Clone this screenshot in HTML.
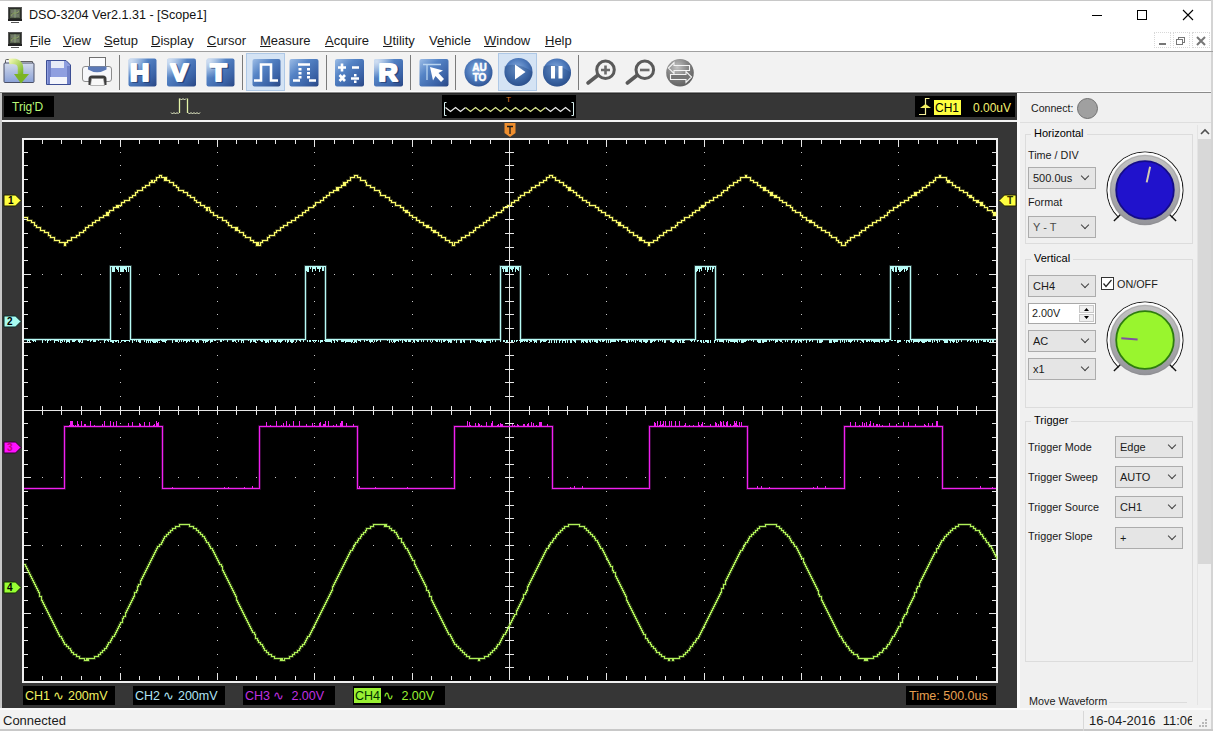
<!DOCTYPE html>
<html><head><meta charset="utf-8">
<style>
*{margin:0;padding:0;box-sizing:border-box}
html,body{width:1213px;height:731px;overflow:hidden;background:#f0f0f0;font-family:"Liberation Sans",sans-serif;color:#1a1a1a}
.a{position:absolute}
.t{position:absolute;white-space:nowrap;line-height:1}
.ul{text-decoration:underline;text-underline-offset:1px;text-decoration-thickness:1px}
.combo{position:absolute;background:#e5e5e5;border:1px solid #acacac;font-size:11px;}
.combo span{position:absolute;left:4px;top:5px;white-space:nowrap;line-height:1}
.combo i{position:absolute;right:7px;top:5px;width:6px;height:6px;border-right:1px solid #404040;border-bottom:1px solid #404040;transform:rotate(45deg);}
.gb{position:absolute;border:1px solid #dcdcdc;}
.gbl{position:absolute;background:#f0f0f0;padding:0 3px;font-size:11px;line-height:1;color:#000}
.lbl{position:absolute;font-size:10.8px;line-height:1;white-space:nowrap}
</style></head>
<body>
<!-- title bar -->
<div class="a" style="left:0;top:0;width:1213px;height:51px;background:#fff"></div>
<div class="a" style="left:0;top:0;width:1213px;height:1px;background:#c8c8c8"></div>
<div class="a" style="left:1211px;top:0;width:2px;height:731px;background:#d4d4d4"></div>
<div class="a" style="left:0;top:51px;width:1213px;height:1px;background:#a0a0a0"></div>
<!-- app icon -->
<svg class="a" style="left:8px;top:7px" width="15" height="17"><rect x="0.5" y="0.5" width="13" height="12" fill="#2a2e28" stroke="#555"/><rect x="2" y="2" width="10" height="9" fill="#5a6450"/><path d="M3 3h3v3h-3zM8 3h3v3h-3zM3 7h3v3h-3zM8 7h3v3h-3z" fill="#707868"/><path d="M7 2.5V10.5" stroke="#a0b890" stroke-width="1"/><path d="M3 9Q5 5 7 6T11 4" stroke="#8aa060" stroke-width="1" fill="none"/><rect x="0" y="12" width="14" height="2" fill="#222"/><rect x="3" y="15" width="8" height="1" fill="#555"/></svg>
<div class="t" style="left:29px;top:9px;font-size:12.6px;color:#111">DSO-3204 Ver2.1.31 - [Scope1]</div>
<div class="a" style="left:1092px;top:15px;width:10px;height:1px;background:#000"></div>
<div class="a" style="left:1137px;top:10px;width:10px;height:10px;border:1px solid #000"></div>
<svg class="a" style="left:1182px;top:9px" width="12" height="12"><path d="M1 1L11 11M11 1L1 11" stroke="#000" stroke-width="1.1"/></svg>
<!-- menu -->
<svg class="a" style="left:8px;top:32px" width="15" height="17"><rect x="0.5" y="0.5" width="13" height="12" fill="#2a2e28" stroke="#555"/><rect x="2" y="2" width="10" height="9" fill="#5a6450"/><path d="M3 3h3v3h-3zM8 3h3v3h-3zM3 7h3v3h-3zM8 7h3v3h-3z" fill="#707868"/><path d="M7 2.5V10.5" stroke="#a0b890" stroke-width="1"/><path d="M3 9Q5 5 7 6T11 4" stroke="#8aa060" stroke-width="1" fill="none"/><rect x="0" y="12" width="14" height="2" fill="#222"/><rect x="3" y="15" width="8" height="1" fill="#555"/></svg>
<div class="t" style="left:30px;top:34px;font-size:13px"><span class="ul">F</span>ile</div>
<div class="t" style="left:63px;top:34px;font-size:13px"><span class="ul">V</span>iew</div>
<div class="t" style="left:104px;top:34px;font-size:13px"><span class="ul">S</span>etup</div>
<div class="t" style="left:151px;top:34px;font-size:13px"><span class="ul">D</span>isplay</div>
<div class="t" style="left:207px;top:34px;font-size:13px"><span class="ul">C</span>ursor</div>
<div class="t" style="left:260px;top:34px;font-size:13px"><span class="ul">M</span>easure</div>
<div class="t" style="left:325px;top:34px;font-size:13px"><span class="ul">A</span>cquire</div>
<div class="t" style="left:383px;top:34px;font-size:13px"><span class="ul">U</span>tility</div>
<div class="t" style="left:429px;top:34px;font-size:13px">V<span class="ul">e</span>hicle</div>
<div class="t" style="left:484px;top:34px;font-size:13px"><span class="ul">W</span>indow</div>
<div class="t" style="left:545px;top:34px;font-size:13px"><span class="ul">H</span>elp</div>
<!-- MDI buttons -->
<div class="a" style="left:1154px;top:32px;width:17px;height:16px;border:1px dotted #d8d8d8"></div>
<div class="a" style="left:1173px;top:32px;width:17px;height:16px;border:1px dotted #d8d8d8"></div>
<div class="a" style="left:1192px;top:32px;width:18px;height:16px;border:1px dotted #d8d8d8"></div>
<div class="a" style="left:1159px;top:43px;width:7px;height:2px;background:#777"></div>
<div class="a" style="left:1178px;top:37px;width:7px;height:6px;border:1px solid #777"></div>
<div class="a" style="left:1176px;top:39px;width:7px;height:6px;border:1px solid #777;background:#fff"></div>
<svg class="a" style="left:1196px;top:36px" width="10" height="10"><path d="M1 1L9 9M9 1L1 9" stroke="#777" stroke-width="2"/></svg>

<!-- toolbar -->
<div class="a" style="left:0;top:52px;width:1211px;height:41px;background:#f2f2f2"></div><div class="a" style="left:0;top:91px;width:1211px;height:1px;background:#fbfbfb"></div><div class="a" style="left:0;top:92px;width:1211px;height:1px;background:#8a8a8a"></div>
<svg class="a" style="left:0;top:52px" width="720" height="41" viewBox="0 52 720 41">
<defs>
 <linearGradient id="bsq" x1="0" y1="0" x2="1" y2="1">
  <stop offset="0" stop-color="#9dbde6"/><stop offset="0.35" stop-color="#5584c6"/><stop offset="0.75" stop-color="#3a62a6"/><stop offset="1" stop-color="#2a4784"/>
 </linearGradient>
 <linearGradient id="bedge" x1="0" y1="0" x2="0" y2="1">
  <stop offset="0" stop-color="#ffffff" stop-opacity="0"/><stop offset="0.8" stop-color="#1a3060" stop-opacity="0"/><stop offset="1" stop-color="#1a3060" stop-opacity="0.5"/>
 </linearGradient>
 <radialGradient id="bci" cx="0.45" cy="0.4" r="0.65">
  <stop offset="0" stop-color="#88aee0"/><stop offset="0.6" stop-color="#4a76b8"/><stop offset="1" stop-color="#2c4f8e"/>
 </radialGradient>
 <radialGradient id="gci" cx="0.4" cy="0.3" r="0.75">
  <stop offset="0" stop-color="#c4c4c4"/><stop offset="0.55" stop-color="#808080"/><stop offset="1" stop-color="#5c5c5c"/>
 </radialGradient>
 <linearGradient id="fold" x1="0" y1="0" x2="0" y2="1">
  <stop offset="0" stop-color="#d4dcec"/><stop offset="0.5" stop-color="#aebde0"/><stop offset="1" stop-color="#8aa2d8"/>
 </linearGradient>
 <linearGradient id="garr" x1="0" y1="0" x2="1" y2="1">
  <stop offset="0" stop-color="#f0f8b0"/><stop offset="1" stop-color="#7ab828"/>
 </linearGradient>
<radialGradient id="hl" cx="0.1" cy="0.1" r="0.6">
  <stop offset="0" stop-color="#ffffff" stop-opacity="0.6"/><stop offset="1" stop-color="#ffffff" stop-opacity="0"/>
 </radialGradient>
</defs>
<!-- separators -->
<path d="M119.5 55V90M242.5 55V90M326.5 55V90M410.5 55V90M455.5 55V90M578.5 55V90" stroke="#7a7a7a" stroke-width="1"/>
<!-- pressed backgrounds -->
<rect x="246.5" y="53.5" width="38" height="37" fill="#d4e3f4" stroke="#aec8e6"/>
<rect x="498.5" y="53.5" width="38" height="37" fill="#d4e3f4" stroke="#aec8e6"/>
<!-- folder -->
<path d="M5.5 63V60.5Q5.5 59.5 6.5 59.5H16L17.5 61.5H32.5V63" fill="#eef0f6" stroke="#606060" stroke-width="1"/>
<rect x="4" y="63" width="30" height="19.5" rx="1" fill="url(#fold)" stroke="#4a5068" stroke-width="1"/>
<path d="M9 61.5Q20.5 60 20.5 68V75" stroke="url(#garr)" stroke-width="5.5" fill="none"/>
<path d="M14 74H29L21 83.5Z" fill="#7cb424"/>
<!-- floppy -->
<path d="M46.5 60.5H66L70.5 65V84.5H46.5Z" fill="#8f9fe0" stroke="#3c4e94" stroke-width="1"/>
<rect x="48" y="61" width="3" height="23" fill="#7282c8"/>
<rect x="67" y="66" width="3" height="18" fill="#7282c8"/>
<rect x="51" y="61" width="13" height="7" fill="#e8ecf8"/>
<rect x="50" y="77" width="17" height="7" fill="#f4f6fc"/>
<!-- printer -->
<rect x="89.5" y="57.5" width="16" height="10" fill="#fafbfd" stroke="#707070" stroke-width="1"/>
<rect x="82.5" y="66.5" width="29" height="15" rx="2.5" fill="#f6f7fa" stroke="#8c8c8c" stroke-width="1"/>
<path d="M88 66.5H106.5V69.5Q97 75 88 69.5Z" fill="#5a78b6"/>
<path d="M88.5 85V79Q88.5 75.5 92 75.5H103Q106.5 75.5 106.5 79V85Z" fill="#3c3c3c"/>
<path d="M90.5 85.5L91.5 78.5H103.5L104.5 85.5Z" fill="#f8f8f8" stroke="#888" stroke-width="0.6"/>
<!-- H V T -->
<rect x="128.5" y="58.5" width="28" height="28" rx="2" fill="url(#bsq)"/><rect x="128.5" y="58.5" width="28" height="28" rx="2" fill="url(#hl)"/>
<rect x="167" y="58.5" width="29" height="28" rx="2" fill="url(#bsq)"/><rect x="167" y="58.5" width="29" height="28" rx="2" fill="url(#hl)"/>
<rect x="206.5" y="58.5" width="28" height="28" rx="2" fill="url(#bsq)"/><rect x="206.5" y="58.5" width="28" height="28" rx="2" fill="url(#hl)"/>
<rect x="374" y="59" width="29" height="27.5" rx="2" fill="url(#bsq)"/><rect x="374" y="59" width="29" height="27.5" rx="2" fill="url(#hl)"/>
<g style="font-family:'Liberation Sans';font-weight:bold" font-size="23" text-anchor="middle" stroke-linejoin="round">
 <g fill="#1a2c58" stroke="#1a2c58" stroke-width="2" opacity="0.55" transform="translate(1.5 1.5)">
  <text transform="translate(139.5 80.5) scale(1.16 1)">H</text>
  <text transform="translate(179.5 80.5) scale(1.16 1)">V</text>
  <text transform="translate(218.5 80.5) scale(1.16 1)">T</text>
  <text transform="translate(388 80.5) scale(1.16 1)">R</text>
 </g>
 <g fill="#fff" stroke="#fff" stroke-width="2">
  <text transform="translate(139.5 80.5) scale(1.16 1)">H</text>
  <text transform="translate(179.5 80.5) scale(1.16 1)">V</text>
  <text transform="translate(218.5 80.5) scale(1.16 1)">T</text>
  <text transform="translate(388 80.5) scale(1.16 1)">R</text>
 </g>
</g>
<g fill="#fff">
 <!-- pulse -->
 <rect x="252.5" y="59" width="28" height="27.5" rx="2" fill="url(#bsq)"/>
 <path d="M254 80.5H261V64.5H271V80.5H278" stroke="#fff" stroke-width="2.6" fill="none"/>
 <!-- dotted pulse -->
 <rect x="289.5" y="59" width="29" height="27.5" rx="2" fill="url(#bsq)"/>
 <path d="M293 80.5H300M309 80.5H316M298 64.5H310" stroke="#fff" stroke-width="2.6" fill="none"/>
 <path d="M298.5 68h3v2.5h-3zM298.5 72h3v2.5h-3zM298.5 76h3v2.5h-3zM307 68h3v2.5h-3zM307 72h3v2.5h-3zM307 76h3v2.5h-3z" fill="#fff"/>
 <!-- math -->
 <rect x="335" y="59" width="29" height="27.5" rx="2" fill="url(#bsq)"/>
 <path d="M338 67.5H346M342 63.5V71.5M352 67.5H359M339.5 75L345 81M345 75L339.5 81M351 78.5H359" stroke="#fff" stroke-width="2.6" fill="none"/>
 <path d="M354 74h2.5v2.5h-2.5zM354 80.5h2.5v2.5h-2.5z" fill="#fff"/>
 <!-- cursor -->
 <rect x="419.5" y="59" width="29" height="27.5" rx="2" fill="url(#bsq)"/>
 <path d="M427 64V80M423 64.5H441" stroke="#b8d4f0" stroke-width="1.3" fill="none"/>
 <path d="M430 67L443 70.5L438.5 73L444 79L441 82L435.5 76L433 80.5Z" fill="#fff"/>
 <!-- AUTO -->
 <circle cx="478.5" cy="72.5" r="14" fill="url(#bci)"/>
 <g style="font-family:'Liberation Sans';font-weight:bold" font-size="10" text-anchor="middle" stroke="#fff" stroke-width="0.5">
 <text x="479.5" y="71">AU</text>
 <text x="479.5" y="80.5">TO</text>
 </g>
 <!-- play -->
 <circle cx="518.5" cy="72" r="14" fill="url(#bci)"/><path d="M504.5 72A14 14 0 0 0 532.5 72Q518 62 504.5 66Z" fill="#23477f" opacity="0.35"/>
 <path d="M515 64.5L525.5 72L515 79.5Z" fill="#fff"/>
 <!-- pause -->
 <circle cx="557" cy="72.5" r="14" fill="url(#bci)"/><path d="M543 72.5A14 14 0 0 0 571 72.5Q556.5 62.5 543 66.5Z" fill="#23477f" opacity="0.35"/>
 <path d="M551 66h4v12.5h-4zM558.5 66h4v12.5h-4z" fill="#fff"/>
</g>
<!-- zoom + -->
<circle cx="605.5" cy="69.8" r="8.8" fill="#f2f2f2" stroke="#5a5a5a" stroke-width="3"/>
<path d="M588 83L597.5 75.5" stroke="#5a5a5a" stroke-width="3.6" stroke-linecap="round"/>
<path d="M601 70H610M605.5 65.5V74.5" stroke="#6a6a6a" stroke-width="2.6"/>
<!-- zoom - -->
<circle cx="644.8" cy="69.8" r="8.8" fill="#f2f2f2" stroke="#5a5a5a" stroke-width="3"/>
<path d="M627.3 83L636.8 75.5" stroke="#5a5a5a" stroke-width="3.6" stroke-linecap="round"/>
<path d="M640 70H649.5" stroke="#6a6a6a" stroke-width="2.6"/>
<!-- gray circle -->
<circle cx="680" cy="72.8" r="13.8" fill="url(#gci)"/>
<path d="M668.5 68L674 62.5V65.5H689.5V70.5H674V73.5Z" fill="none" stroke="#f4f4f4" stroke-width="1.1"/><path d="M691.5 77L686 71.5V74.5H670.5V79.5H686V82.5Z" fill="#767676" stroke="#f4f4f4" stroke-width="1.1"/>
</svg>


<!-- scope area -->
<div class="a" style="left:2px;top:93px;width:1015px;height:615px;background:#363636"></div><div class="a" style="left:2px;top:93px;width:1015px;height:1px;background:#2a2a2a"></div>
<div class="a" style="left:0;top:93px;width:2px;height:616px;background:#c8c8c8"></div>
<div class="a" style="left:2px;top:120px;width:1015px;height:2px;background:#f4f4f4"></div>
<!-- Trig'D -->
<div class="a" style="left:4px;top:96px;width:50px;height:21px;background:#000"></div>
<div class="t" style="left:12px;top:101px;font-size:12px;color:#b8f878">Trig'D</div>
<!-- pulse icon -->
<svg class="a" style="left:0;top:0" width="210" height="125"><path d="M179.5 113V98.5M187.5 98.5V113" stroke="#e4f4a8" stroke-width="1.3" fill="none"/><path d="M171.0 112.5 L172.5 114.0 L174.0 112.5 L175.5 114.0 L177.0 112.5 L178.5 114.0 M180.0 98.5 L181.5 100.0 L183.0 98.5 L184.5 100.0 L186.0 98.5 M188.0 112.5 L189.5 114.0 L191.0 112.5 L192.5 114.0 L194.0 112.5 L195.5 114.0 L197.0 112.5 L198.5 114.0 L200.0 112.5" stroke="#f0f8d0" stroke-width="1" fill="none"/></svg>
<!-- zigzag box -->
<div class="a" style="left:442px;top:95px;width:134px;height:23px;background:#000"></div>
<svg class="a" style="left:0;top:0" width="600" height="125"><path d="M446.5 102.5H444.5V115.5H446.5M571.5 102.5H573.5V115.5H571.5" stroke="#d8f0f0" stroke-width="1" fill="none"/><path d="M445.5 107.5 L450.5 111.5 L455.5 107.5 L460.5 111.5 L465.5 107.5" stroke="#ececec" stroke-width="1.2" fill="none"/><path d="M545.5 107.5 L550.5 111.5 L555.5 107.5 L560.5 111.5 L565.5 107.5 L570.5 111.5" stroke="#ececec" stroke-width="1.2" fill="none"/><path d="M465.5 107.5 L470.5 111.5 L475.5 107.5 L480.5 111.5 L485.5 107.5 L490.5 111.5 L495.5 107.5 L500.5 111.5 L505.5 107.5 L510.5 111.5 L515.5 107.5 L520.5 111.5 L525.5 107.5 L530.5 111.5 L535.5 107.5 L540.5 111.5 L545.5 107.5" stroke="#dce890" stroke-width="1.2" fill="none"/></svg>
<div class="t" style="left:506px;top:96px;font-size:8px;color:#e07a28">T</div>
<!-- trigger info -->
<div class="a" style="left:915px;top:96px;width:100px;height:21px;background:#000"></div>
<svg class="a" style="left:915px;top:96px" width="20" height="21"><path d="M4 18.5H10.5V2.5H14.5" stroke="#f4ef9a" stroke-width="1.2" fill="none"/><path d="M5 12H16L10.5 8Z" fill="#f4ef60"/></svg>
<div class="a" style="left:934px;top:100px;width:27px;height:15px;background:#ffff40"></div>
<div class="t" style="left:935px;top:102px;font-size:12px;color:#000">CH1</div>
<div class="t" style="left:973px;top:102px;font-size:12px;color:#f4f070">0.00uV</div>
<!-- T marker top -->
<svg class="a" style="left:503px;top:122px" width="14" height="16"><path d="M1.5 1H12.5V11L7 15L1.5 11Z" fill="#ee8e2e"/><path d="M4 4.5H10M7 4.5V12" stroke="#1a1a1a" stroke-width="1.3"/></svg>

<svg width="1213" height="731" style="position:absolute;left:0;top:0" shape-rendering="crispEdges"><rect x="23" y="139" width="974" height="543" fill="#000" stroke="#f0f0f0" stroke-width="2"/><path d="M120 152h1v1h-1zM120 165h1v1h-1zM120 179h1v1h-1zM120 192h1v1h-1zM120 206h1v1h-1zM120 219h1v1h-1zM120 233h1v1h-1zM120 247h1v1h-1zM120 260h1v1h-1zM120 274h1v1h-1zM120 287h1v1h-1zM120 301h1v1h-1zM120 314h1v1h-1zM120 328h1v1h-1zM120 342h1v1h-1zM120 355h1v1h-1zM120 369h1v1h-1zM120 382h1v1h-1zM120 396h1v1h-1zM120 410h1v1h-1zM120 423h1v1h-1zM120 437h1v1h-1zM120 450h1v1h-1zM120 464h1v1h-1zM120 477h1v1h-1zM120 491h1v1h-1zM120 505h1v1h-1zM120 518h1v1h-1zM120 532h1v1h-1zM120 545h1v1h-1zM120 559h1v1h-1zM120 572h1v1h-1zM120 586h1v1h-1zM120 600h1v1h-1zM120 613h1v1h-1zM120 627h1v1h-1zM120 640h1v1h-1zM120 654h1v1h-1zM120 667h1v1h-1zM217 152h1v1h-1zM217 165h1v1h-1zM217 179h1v1h-1zM217 192h1v1h-1zM217 206h1v1h-1zM217 219h1v1h-1zM217 233h1v1h-1zM217 247h1v1h-1zM217 260h1v1h-1zM217 274h1v1h-1zM217 287h1v1h-1zM217 301h1v1h-1zM217 314h1v1h-1zM217 328h1v1h-1zM217 342h1v1h-1zM217 355h1v1h-1zM217 369h1v1h-1zM217 382h1v1h-1zM217 396h1v1h-1zM217 410h1v1h-1zM217 423h1v1h-1zM217 437h1v1h-1zM217 450h1v1h-1zM217 464h1v1h-1zM217 477h1v1h-1zM217 491h1v1h-1zM217 505h1v1h-1zM217 518h1v1h-1zM217 532h1v1h-1zM217 545h1v1h-1zM217 559h1v1h-1zM217 572h1v1h-1zM217 586h1v1h-1zM217 600h1v1h-1zM217 613h1v1h-1zM217 627h1v1h-1zM217 640h1v1h-1zM217 654h1v1h-1zM217 667h1v1h-1zM314 152h1v1h-1zM314 165h1v1h-1zM314 179h1v1h-1zM314 192h1v1h-1zM314 206h1v1h-1zM314 219h1v1h-1zM314 233h1v1h-1zM314 247h1v1h-1zM314 260h1v1h-1zM314 274h1v1h-1zM314 287h1v1h-1zM314 301h1v1h-1zM314 314h1v1h-1zM314 328h1v1h-1zM314 342h1v1h-1zM314 355h1v1h-1zM314 369h1v1h-1zM314 382h1v1h-1zM314 396h1v1h-1zM314 410h1v1h-1zM314 423h1v1h-1zM314 437h1v1h-1zM314 450h1v1h-1zM314 464h1v1h-1zM314 477h1v1h-1zM314 491h1v1h-1zM314 505h1v1h-1zM314 518h1v1h-1zM314 532h1v1h-1zM314 545h1v1h-1zM314 559h1v1h-1zM314 572h1v1h-1zM314 586h1v1h-1zM314 600h1v1h-1zM314 613h1v1h-1zM314 627h1v1h-1zM314 640h1v1h-1zM314 654h1v1h-1zM314 667h1v1h-1zM412 152h1v1h-1zM412 165h1v1h-1zM412 179h1v1h-1zM412 192h1v1h-1zM412 206h1v1h-1zM412 219h1v1h-1zM412 233h1v1h-1zM412 247h1v1h-1zM412 260h1v1h-1zM412 274h1v1h-1zM412 287h1v1h-1zM412 301h1v1h-1zM412 314h1v1h-1zM412 328h1v1h-1zM412 342h1v1h-1zM412 355h1v1h-1zM412 369h1v1h-1zM412 382h1v1h-1zM412 396h1v1h-1zM412 410h1v1h-1zM412 423h1v1h-1zM412 437h1v1h-1zM412 450h1v1h-1zM412 464h1v1h-1zM412 477h1v1h-1zM412 491h1v1h-1zM412 505h1v1h-1zM412 518h1v1h-1zM412 532h1v1h-1zM412 545h1v1h-1zM412 559h1v1h-1zM412 572h1v1h-1zM412 586h1v1h-1zM412 600h1v1h-1zM412 613h1v1h-1zM412 627h1v1h-1zM412 640h1v1h-1zM412 654h1v1h-1zM412 667h1v1h-1zM606 152h1v1h-1zM606 165h1v1h-1zM606 179h1v1h-1zM606 192h1v1h-1zM606 206h1v1h-1zM606 219h1v1h-1zM606 233h1v1h-1zM606 247h1v1h-1zM606 260h1v1h-1zM606 274h1v1h-1zM606 287h1v1h-1zM606 301h1v1h-1zM606 314h1v1h-1zM606 328h1v1h-1zM606 342h1v1h-1zM606 355h1v1h-1zM606 369h1v1h-1zM606 382h1v1h-1zM606 396h1v1h-1zM606 410h1v1h-1zM606 423h1v1h-1zM606 437h1v1h-1zM606 450h1v1h-1zM606 464h1v1h-1zM606 477h1v1h-1zM606 491h1v1h-1zM606 505h1v1h-1zM606 518h1v1h-1zM606 532h1v1h-1zM606 545h1v1h-1zM606 559h1v1h-1zM606 572h1v1h-1zM606 586h1v1h-1zM606 600h1v1h-1zM606 613h1v1h-1zM606 627h1v1h-1zM606 640h1v1h-1zM606 654h1v1h-1zM606 667h1v1h-1zM704 152h1v1h-1zM704 165h1v1h-1zM704 179h1v1h-1zM704 192h1v1h-1zM704 206h1v1h-1zM704 219h1v1h-1zM704 233h1v1h-1zM704 247h1v1h-1zM704 260h1v1h-1zM704 274h1v1h-1zM704 287h1v1h-1zM704 301h1v1h-1zM704 314h1v1h-1zM704 328h1v1h-1zM704 342h1v1h-1zM704 355h1v1h-1zM704 369h1v1h-1zM704 382h1v1h-1zM704 396h1v1h-1zM704 410h1v1h-1zM704 423h1v1h-1zM704 437h1v1h-1zM704 450h1v1h-1zM704 464h1v1h-1zM704 477h1v1h-1zM704 491h1v1h-1zM704 505h1v1h-1zM704 518h1v1h-1zM704 532h1v1h-1zM704 545h1v1h-1zM704 559h1v1h-1zM704 572h1v1h-1zM704 586h1v1h-1zM704 600h1v1h-1zM704 613h1v1h-1zM704 627h1v1h-1zM704 640h1v1h-1zM704 654h1v1h-1zM704 667h1v1h-1zM801 152h1v1h-1zM801 165h1v1h-1zM801 179h1v1h-1zM801 192h1v1h-1zM801 206h1v1h-1zM801 219h1v1h-1zM801 233h1v1h-1zM801 247h1v1h-1zM801 260h1v1h-1zM801 274h1v1h-1zM801 287h1v1h-1zM801 301h1v1h-1zM801 314h1v1h-1zM801 328h1v1h-1zM801 342h1v1h-1zM801 355h1v1h-1zM801 369h1v1h-1zM801 382h1v1h-1zM801 396h1v1h-1zM801 410h1v1h-1zM801 423h1v1h-1zM801 437h1v1h-1zM801 450h1v1h-1zM801 464h1v1h-1zM801 477h1v1h-1zM801 491h1v1h-1zM801 505h1v1h-1zM801 518h1v1h-1zM801 532h1v1h-1zM801 545h1v1h-1zM801 559h1v1h-1zM801 572h1v1h-1zM801 586h1v1h-1zM801 600h1v1h-1zM801 613h1v1h-1zM801 627h1v1h-1zM801 640h1v1h-1zM801 654h1v1h-1zM801 667h1v1h-1zM898 152h1v1h-1zM898 165h1v1h-1zM898 179h1v1h-1zM898 192h1v1h-1zM898 206h1v1h-1zM898 219h1v1h-1zM898 233h1v1h-1zM898 247h1v1h-1zM898 260h1v1h-1zM898 274h1v1h-1zM898 287h1v1h-1zM898 301h1v1h-1zM898 314h1v1h-1zM898 328h1v1h-1zM898 342h1v1h-1zM898 355h1v1h-1zM898 369h1v1h-1zM898 382h1v1h-1zM898 396h1v1h-1zM898 410h1v1h-1zM898 423h1v1h-1zM898 437h1v1h-1zM898 450h1v1h-1zM898 464h1v1h-1zM898 477h1v1h-1zM898 491h1v1h-1zM898 505h1v1h-1zM898 518h1v1h-1zM898 532h1v1h-1zM898 545h1v1h-1zM898 559h1v1h-1zM898 572h1v1h-1zM898 586h1v1h-1zM898 600h1v1h-1zM898 613h1v1h-1zM898 627h1v1h-1zM898 640h1v1h-1zM898 654h1v1h-1zM898 667h1v1h-1zM42 206h1v1h-1zM61 206h1v1h-1zM81 206h1v1h-1zM100 206h1v1h-1zM120 206h1v1h-1zM139 206h1v1h-1zM159 206h1v1h-1zM178 206h1v1h-1zM198 206h1v1h-1zM217 206h1v1h-1zM236 206h1v1h-1zM256 206h1v1h-1zM275 206h1v1h-1zM295 206h1v1h-1zM314 206h1v1h-1zM334 206h1v1h-1zM353 206h1v1h-1zM373 206h1v1h-1zM392 206h1v1h-1zM412 206h1v1h-1zM431 206h1v1h-1zM451 206h1v1h-1zM470 206h1v1h-1zM490 206h1v1h-1zM509 206h1v1h-1zM529 206h1v1h-1zM548 206h1v1h-1zM567 206h1v1h-1zM587 206h1v1h-1zM606 206h1v1h-1zM626 206h1v1h-1zM645 206h1v1h-1zM665 206h1v1h-1zM684 206h1v1h-1zM704 206h1v1h-1zM723 206h1v1h-1zM743 206h1v1h-1zM762 206h1v1h-1zM782 206h1v1h-1zM801 206h1v1h-1zM821 206h1v1h-1zM840 206h1v1h-1zM860 206h1v1h-1zM879 206h1v1h-1zM898 206h1v1h-1zM918 206h1v1h-1zM937 206h1v1h-1zM957 206h1v1h-1zM976 206h1v1h-1zM42 274h1v1h-1zM61 274h1v1h-1zM81 274h1v1h-1zM100 274h1v1h-1zM120 274h1v1h-1zM139 274h1v1h-1zM159 274h1v1h-1zM178 274h1v1h-1zM198 274h1v1h-1zM217 274h1v1h-1zM236 274h1v1h-1zM256 274h1v1h-1zM275 274h1v1h-1zM295 274h1v1h-1zM314 274h1v1h-1zM334 274h1v1h-1zM353 274h1v1h-1zM373 274h1v1h-1zM392 274h1v1h-1zM412 274h1v1h-1zM431 274h1v1h-1zM451 274h1v1h-1zM470 274h1v1h-1zM490 274h1v1h-1zM509 274h1v1h-1zM529 274h1v1h-1zM548 274h1v1h-1zM567 274h1v1h-1zM587 274h1v1h-1zM606 274h1v1h-1zM626 274h1v1h-1zM645 274h1v1h-1zM665 274h1v1h-1zM684 274h1v1h-1zM704 274h1v1h-1zM723 274h1v1h-1zM743 274h1v1h-1zM762 274h1v1h-1zM782 274h1v1h-1zM801 274h1v1h-1zM821 274h1v1h-1zM840 274h1v1h-1zM860 274h1v1h-1zM879 274h1v1h-1zM898 274h1v1h-1zM918 274h1v1h-1zM937 274h1v1h-1zM957 274h1v1h-1zM976 274h1v1h-1zM42 342h1v1h-1zM61 342h1v1h-1zM81 342h1v1h-1zM100 342h1v1h-1zM120 342h1v1h-1zM139 342h1v1h-1zM159 342h1v1h-1zM178 342h1v1h-1zM198 342h1v1h-1zM217 342h1v1h-1zM236 342h1v1h-1zM256 342h1v1h-1zM275 342h1v1h-1zM295 342h1v1h-1zM314 342h1v1h-1zM334 342h1v1h-1zM353 342h1v1h-1zM373 342h1v1h-1zM392 342h1v1h-1zM412 342h1v1h-1zM431 342h1v1h-1zM451 342h1v1h-1zM470 342h1v1h-1zM490 342h1v1h-1zM509 342h1v1h-1zM529 342h1v1h-1zM548 342h1v1h-1zM567 342h1v1h-1zM587 342h1v1h-1zM606 342h1v1h-1zM626 342h1v1h-1zM645 342h1v1h-1zM665 342h1v1h-1zM684 342h1v1h-1zM704 342h1v1h-1zM723 342h1v1h-1zM743 342h1v1h-1zM762 342h1v1h-1zM782 342h1v1h-1zM801 342h1v1h-1zM821 342h1v1h-1zM840 342h1v1h-1zM860 342h1v1h-1zM879 342h1v1h-1zM898 342h1v1h-1zM918 342h1v1h-1zM937 342h1v1h-1zM957 342h1v1h-1zM976 342h1v1h-1zM42 477h1v1h-1zM61 477h1v1h-1zM81 477h1v1h-1zM100 477h1v1h-1zM120 477h1v1h-1zM139 477h1v1h-1zM159 477h1v1h-1zM178 477h1v1h-1zM198 477h1v1h-1zM217 477h1v1h-1zM236 477h1v1h-1zM256 477h1v1h-1zM275 477h1v1h-1zM295 477h1v1h-1zM314 477h1v1h-1zM334 477h1v1h-1zM353 477h1v1h-1zM373 477h1v1h-1zM392 477h1v1h-1zM412 477h1v1h-1zM431 477h1v1h-1zM451 477h1v1h-1zM470 477h1v1h-1zM490 477h1v1h-1zM509 477h1v1h-1zM529 477h1v1h-1zM548 477h1v1h-1zM567 477h1v1h-1zM587 477h1v1h-1zM606 477h1v1h-1zM626 477h1v1h-1zM645 477h1v1h-1zM665 477h1v1h-1zM684 477h1v1h-1zM704 477h1v1h-1zM723 477h1v1h-1zM743 477h1v1h-1zM762 477h1v1h-1zM782 477h1v1h-1zM801 477h1v1h-1zM821 477h1v1h-1zM840 477h1v1h-1zM860 477h1v1h-1zM879 477h1v1h-1zM898 477h1v1h-1zM918 477h1v1h-1zM937 477h1v1h-1zM957 477h1v1h-1zM976 477h1v1h-1zM42 545h1v1h-1zM61 545h1v1h-1zM81 545h1v1h-1zM100 545h1v1h-1zM120 545h1v1h-1zM139 545h1v1h-1zM159 545h1v1h-1zM178 545h1v1h-1zM198 545h1v1h-1zM217 545h1v1h-1zM236 545h1v1h-1zM256 545h1v1h-1zM275 545h1v1h-1zM295 545h1v1h-1zM314 545h1v1h-1zM334 545h1v1h-1zM353 545h1v1h-1zM373 545h1v1h-1zM392 545h1v1h-1zM412 545h1v1h-1zM431 545h1v1h-1zM451 545h1v1h-1zM470 545h1v1h-1zM490 545h1v1h-1zM509 545h1v1h-1zM529 545h1v1h-1zM548 545h1v1h-1zM567 545h1v1h-1zM587 545h1v1h-1zM606 545h1v1h-1zM626 545h1v1h-1zM645 545h1v1h-1zM665 545h1v1h-1zM684 545h1v1h-1zM704 545h1v1h-1zM723 545h1v1h-1zM743 545h1v1h-1zM762 545h1v1h-1zM782 545h1v1h-1zM801 545h1v1h-1zM821 545h1v1h-1zM840 545h1v1h-1zM860 545h1v1h-1zM879 545h1v1h-1zM898 545h1v1h-1zM918 545h1v1h-1zM937 545h1v1h-1zM957 545h1v1h-1zM976 545h1v1h-1zM42 613h1v1h-1zM61 613h1v1h-1zM81 613h1v1h-1zM100 613h1v1h-1zM120 613h1v1h-1zM139 613h1v1h-1zM159 613h1v1h-1zM178 613h1v1h-1zM198 613h1v1h-1zM217 613h1v1h-1zM236 613h1v1h-1zM256 613h1v1h-1zM275 613h1v1h-1zM295 613h1v1h-1zM314 613h1v1h-1zM334 613h1v1h-1zM353 613h1v1h-1zM373 613h1v1h-1zM392 613h1v1h-1zM412 613h1v1h-1zM431 613h1v1h-1zM451 613h1v1h-1zM470 613h1v1h-1zM490 613h1v1h-1zM509 613h1v1h-1zM529 613h1v1h-1zM548 613h1v1h-1zM567 613h1v1h-1zM587 613h1v1h-1zM606 613h1v1h-1zM626 613h1v1h-1zM645 613h1v1h-1zM665 613h1v1h-1zM684 613h1v1h-1zM704 613h1v1h-1zM723 613h1v1h-1zM743 613h1v1h-1zM762 613h1v1h-1zM782 613h1v1h-1zM801 613h1v1h-1zM821 613h1v1h-1zM840 613h1v1h-1zM860 613h1v1h-1zM879 613h1v1h-1zM898 613h1v1h-1zM918 613h1v1h-1zM937 613h1v1h-1zM957 613h1v1h-1zM976 613h1v1h-1z" fill="#c8c8c8"/><path d="M42.5 140v4M42.5 680v-4M61.5 140v4M61.5 680v-4M81.5 140v4M81.5 680v-4M100.5 140v4M100.5 680v-4M120.5 140v7M120.5 680v-7M139.5 140v4M139.5 680v-4M159.5 140v4M159.5 680v-4M178.5 140v4M178.5 680v-4M198.5 140v4M198.5 680v-4M217.5 140v7M217.5 680v-7M236.5 140v4M236.5 680v-4M256.5 140v4M256.5 680v-4M275.5 140v4M275.5 680v-4M295.5 140v4M295.5 680v-4M314.5 140v7M314.5 680v-7M334.5 140v4M334.5 680v-4M353.5 140v4M353.5 680v-4M373.5 140v4M373.5 680v-4M392.5 140v4M392.5 680v-4M412.5 140v7M412.5 680v-7M431.5 140v4M431.5 680v-4M451.5 140v4M451.5 680v-4M470.5 140v4M470.5 680v-4M490.5 140v4M490.5 680v-4M509.5 140v7M509.5 680v-7M529.5 140v4M529.5 680v-4M548.5 140v4M548.5 680v-4M567.5 140v4M567.5 680v-4M587.5 140v4M587.5 680v-4M606.5 140v7M606.5 680v-7M626.5 140v4M626.5 680v-4M645.5 140v4M645.5 680v-4M665.5 140v4M665.5 680v-4M684.5 140v4M684.5 680v-4M704.5 140v7M704.5 680v-7M723.5 140v4M723.5 680v-4M743.5 140v4M743.5 680v-4M762.5 140v4M762.5 680v-4M782.5 140v4M782.5 680v-4M801.5 140v7M801.5 680v-7M821.5 140v4M821.5 680v-4M840.5 140v4M840.5 680v-4M860.5 140v4M860.5 680v-4M879.5 140v4M879.5 680v-4M898.5 140v7M898.5 680v-7M918.5 140v4M918.5 680v-4M937.5 140v4M937.5 680v-4M957.5 140v4M957.5 680v-4M976.5 140v4M976.5 680v-4M24 152.5h4M996 152.5h-4M24 165.5h4M996 165.5h-4M24 179.5h4M996 179.5h-4M24 192.5h4M996 192.5h-4M24 206.5h7M996 206.5h-7M24 219.5h4M996 219.5h-4M24 233.5h4M996 233.5h-4M24 247.5h4M996 247.5h-4M24 260.5h4M996 260.5h-4M24 274.5h7M996 274.5h-7M24 287.5h4M996 287.5h-4M24 301.5h4M996 301.5h-4M24 314.5h4M996 314.5h-4M24 328.5h4M996 328.5h-4M24 342.5h7M996 342.5h-7M24 355.5h4M996 355.5h-4M24 369.5h4M996 369.5h-4M24 382.5h4M996 382.5h-4M24 396.5h4M996 396.5h-4M24 410.5h7M996 410.5h-7M24 423.5h4M996 423.5h-4M24 437.5h4M996 437.5h-4M24 450.5h4M996 450.5h-4M24 464.5h4M996 464.5h-4M24 477.5h7M996 477.5h-7M24 491.5h4M996 491.5h-4M24 505.5h4M996 505.5h-4M24 518.5h4M996 518.5h-4M24 532.5h4M996 532.5h-4M24 545.5h7M996 545.5h-7M24 559.5h4M996 559.5h-4M24 572.5h4M996 572.5h-4M24 586.5h4M996 586.5h-4M24 600.5h4M996 600.5h-4M24 613.5h7M996 613.5h-7M24 627.5h4M996 627.5h-4M24 640.5h4M996 640.5h-4M24 654.5h4M996 654.5h-4M24 667.5h4M996 667.5h-4M24 410.5H996M509.5 140V680M42.5 406v9M61.5 406v9M81.5 406v9M100.5 406v9M120.5 406v9M139.5 406v9M159.5 406v9M178.5 406v9M198.5 406v9M217.5 406v9M236.5 406v9M256.5 406v9M275.5 406v9M295.5 406v9M314.5 406v9M334.5 406v9M353.5 406v9M373.5 406v9M392.5 406v9M412.5 406v9M431.5 406v9M451.5 406v9M470.5 406v9M490.5 406v9M509.5 406v9M529.5 406v9M548.5 406v9M567.5 406v9M587.5 406v9M606.5 406v9M626.5 406v9M645.5 406v9M665.5 406v9M684.5 406v9M704.5 406v9M723.5 406v9M743.5 406v9M762.5 406v9M782.5 406v9M801.5 406v9M821.5 406v9M840.5 406v9M860.5 406v9M879.5 406v9M898.5 406v9M918.5 406v9M937.5 406v9M957.5 406v9M976.5 406v9M505 152.5h9M505 165.5h9M505 179.5h9M505 192.5h9M505 206.5h9M505 219.5h9M505 233.5h9M505 247.5h9M505 260.5h9M505 274.5h9M505 287.5h9M505 301.5h9M505 314.5h9M505 328.5h9M505 342.5h9M505 355.5h9M505 369.5h9M505 382.5h9M505 396.5h9M505 410.5h9M505 423.5h9M505 437.5h9M505 450.5h9M505 464.5h9M505 477.5h9M505 491.5h9M505 505.5h9M505 518.5h9M505 532.5h9M505 545.5h9M505 559.5h9M505 572.5h9M505 586.5h9M505 600.5h9M505 613.5h9M505 627.5h9M505 640.5h9M505 654.5h9M505 667.5h9" stroke="#e6e6e6" stroke-width="1" fill="none"/><g shape-rendering="auto" opacity="0.3"><path d="M24 217.5H27.5V220.5H31.5V222.5H34.5V225.5H36.5V227.5H40.5V230.5H44.5V232.5H48.5V235.5H50.5V237.5H54.5V240.5H59.5V242.5H64.5V245.5H65.5V242.5H67.5V240.5H71.5V237.5H76.5V235.5H79.5V232.5H83.5V230.5H85.5V227.5H88.5V225.5H92.5V222.5H95.5V220.5H99.5V217.5H103.5V215.5H106.5V212.5H107.5V215.5H108.5V212.5H109.5V210.5H113.5V207.5H116.5V205.5H117.5V207.5H118.5V205.5H121.5V202.5H124.5V200.5H129.5V197.5H132.5V195.5H135.5V192.5H137.5V190.5H142.5V187.5H145.5V185.5H149.5V182.5H151.5V180.5H152.5V182.5H154.5V180.5H156.5V177.5H159.5V175.5H161.5V177.5H164.5V180.5H165.5V177.5H166.5V180.5H169.5V182.5H173.5V185.5H176.5V187.5H178.5V190.5H183.5V192.5H187.5V195.5H190.5V197.5H194.5V200.5H196.5V202.5H200.5V205.5H204.5V207.5H206.5V210.5H207.5V207.5H209.5V210.5H210.5V212.5H213.5V215.5H217.5V217.5H222.5V220.5H226.5V222.5H228.5V225.5H231.5V227.5H235.5V230.5H236.5V227.5H237.5V230.5H239.5V232.5H243.5V235.5H245.5V237.5H250.5V240.5H253.5V242.5H256.5V245.5H257.5V242.5H258.5V245.5H260.5V242.5H262.5V240.5H267.5V237.5H269.5V235.5H274.5V232.5H276.5V230.5H280.5V227.5H283.5V225.5H287.5V222.5H291.5V220.5H295.5V217.5H298.5V215.5H302.5V212.5H305.5V210.5H308.5V207.5H313.5V205.5H315.5V202.5H320.5V200.5H323.5V197.5H326.5V195.5H329.5V192.5H333.5V190.5H336.5V187.5H337.5V190.5H338.5V187.5H341.5V185.5H343.5V182.5H344.5V185.5H345.5V182.5H347.5V180.5H350.5V177.5H354.5V175.5H357.5V177.5H360.5V180.5H365.5V182.5H366.5V185.5H370.5V187.5H374.5V190.5H379.5V192.5H380.5V195.5H385.5V197.5H389.5V200.5H391.5V202.5H395.5V205.5H400.5V207.5H403.5V210.5H405.5V212.5H406.5V210.5H407.5V212.5H409.5V215.5H412.5V217.5H416.5V220.5H419.5V222.5H423.5V225.5H426.5V227.5H427.5V225.5H428.5V227.5H431.5V230.5H433.5V232.5H434.5V230.5H435.5V232.5H438.5V235.5H441.5V237.5H445.5V240.5H449.5V242.5H452.5V245.5H454.5V242.5H458.5V240.5H461.5V237.5H465.5V235.5H469.5V232.5H473.5V230.5H475.5V227.5H479.5V225.5H483.5V222.5H486.5V220.5H489.5V217.5H493.5V215.5H496.5V212.5H501.5V210.5H503.5V207.5H507.5V205.5H511.5V202.5H514.5V200.5H518.5V197.5H520.5V195.5H524.5V192.5H529.5V190.5H531.5V187.5H535.5V185.5H539.5V182.5H543.5V180.5H546.5V177.5H549.5V175.5H552.5V177.5H555.5V180.5H559.5V182.5H563.5V185.5H566.5V187.5H568.5V190.5H569.5V187.5H570.5V190.5H573.5V192.5H576.5V195.5H579.5V197.5H582.5V200.5H586.5V202.5H589.5V205.5H595.5V207.5H598.5V210.5H601.5V212.5H605.5V215.5H609.5V217.5H612.5V220.5H616.5V222.5H618.5V225.5H619.5V222.5H620.5V225.5H623.5V227.5H627.5V230.5H629.5V232.5H633.5V235.5H637.5V237.5H639.5V240.5H640.5V237.5H641.5V240.5H644.5V242.5H648.5V245.5H649.5V242.5H653.5V240.5H657.5V237.5H659.5V235.5H663.5V232.5H666.5V230.5H671.5V227.5H675.5V225.5H677.5V222.5H681.5V220.5H684.5V217.5H689.5V215.5H692.5V212.5H695.5V210.5H699.5V207.5H701.5V205.5H702.5V207.5H703.5V205.5H705.5V202.5H709.5V200.5H713.5V197.5H717.5V195.5H721.5V192.5H723.5V190.5H727.5V187.5H729.5V185.5H733.5V182.5H737.5V180.5H740.5V177.5H745.5V175.5H746.5V177.5H750.5V180.5H753.5V182.5H757.5V185.5H760.5V187.5H763.5V190.5H764.5V187.5H765.5V190.5H768.5V192.5H770.5V195.5H771.5V192.5H772.5V195.5H774.5V197.5H775.5V195.5H776.5V197.5H779.5V200.5H782.5V202.5H786.5V205.5H790.5V207.5H792.5V210.5H795.5V212.5H800.5V215.5H802.5V217.5H806.5V220.5H809.5V222.5H810.5V220.5H811.5V222.5H814.5V225.5H817.5V227.5H821.5V230.5H825.5V232.5H829.5V235.5H831.5V237.5H836.5V240.5H838.5V242.5H841.5V245.5H845.5V242.5H847.5V240.5H850.5V237.5H854.5V235.5H859.5V232.5H861.5V230.5H865.5V227.5H868.5V225.5H872.5V222.5H876.5V220.5H880.5V217.5H884.5V215.5H887.5V212.5H889.5V210.5H893.5V207.5H897.5V205.5H900.5V202.5H904.5V200.5H908.5V197.5H911.5V195.5H914.5V192.5H915.5V195.5H916.5V192.5H919.5V190.5H922.5V187.5H926.5V185.5H929.5V182.5H933.5V180.5H935.5V177.5H939.5V175.5H940.5V177.5H946.5V180.5H947.5V182.5H948.5V180.5H949.5V182.5H952.5V185.5H955.5V187.5H959.5V190.5H963.5V192.5H967.5V195.5H969.5V197.5H970.5V195.5H971.5V197.5H973.5V200.5H976.5V202.5H977.5V200.5H978.5V202.5H980.5V205.5H981.5V202.5H982.5V205.5H984.5V207.5H987.5V210.5H992.5V212.5H993.5V215.5H994.5V212.5H995.5V215.5H996" stroke="#fafa6a" stroke-width="2.6" fill="none"/><path d="M24 339.5H110.5V266.5H130.5V339.5H305.5V266.5H325.5V339.5H500.5V266.5H520.5V339.5H695.5V266.5H715.5V339.5H890.5V266.5H910.5V339.5H996" stroke="#b8fbf6" stroke-width="2.6" fill="none"/><path d="M112.5 267v5M113.5 267v5M114.5 267v5M116.5 267v2M117.5 267v3M118.5 267v5M120.5 267v5M121.5 267v5M122.5 267v5M123.5 267v5M124.5 267v2M125.5 267v3M126.5 267v5M128.5 267v5M306.5 267v4M307.5 267v5M308.5 267v5M310.5 267v2M312.5 267v5M313.5 267v2M314.5 267v2M315.5 267v4M317.5 267v2M318.5 267v2M319.5 267v5M320.5 267v2M322.5 267v4M323.5 267v4M502.5 267v2M503.5 267v5M504.5 267v2M505.5 267v5M506.5 267v5M507.5 267v5M509.5 267v5M510.5 267v2M511.5 267v3M512.5 267v5M513.5 267v2M515.5 267v5M516.5 267v2M517.5 267v3M518.5 267v4M696.5 267v5M697.5 267v4M698.5 267v2M699.5 267v5M700.5 267v2M701.5 267v4M705.5 267v3M707.5 267v5M708.5 267v3M710.5 267v3M712.5 267v5M713.5 267v2M891.5 267v2M892.5 267v4M893.5 267v5M895.5 267v5M896.5 267v5M898.5 267v3M899.5 267v5M900.5 267v5M901.5 267v4M902.5 267v3M903.5 267v2M904.5 267v5M905.5 267v2M906.5 267v4M907.5 267v3M27.5 340v2M28.5 340v1M29.5 340v2M32.5 340v1M33.5 340v2M34.5 340v1M35.5 340v2M42.5 340v3M45.5 340v1M47.5 340v3M48.5 340v1M50.5 340v1M54.5 340v3M55.5 340v1M56.5 340v1M57.5 340v1M58.5 340v2M60.5 340v3M61.5 340v1M62.5 340v2M64.5 340v2M66.5 340v3M67.5 340v2M68.5 340v2M69.5 340v3M72.5 340v2M73.5 340v2M74.5 340v2M75.5 340v1M78.5 340v2M79.5 340v3M80.5 340v2M82.5 340v3M87.5 340v1M88.5 340v1M90.5 340v2M91.5 340v1M93.5 340v2M94.5 340v2M95.5 340v2M98.5 340v1M104.5 340v3M105.5 340v1M107.5 340v1M108.5 340v2M110.5 340v2M111.5 340v2M112.5 340v3M113.5 340v3M114.5 340v1M115.5 340v2M116.5 340v2M117.5 340v1M118.5 340v3M121.5 340v2M122.5 340v1M123.5 340v1M124.5 340v2M125.5 340v2M126.5 340v1M127.5 340v1M128.5 340v1M129.5 340v2M132.5 340v3M134.5 340v1M136.5 340v2M138.5 340v2M139.5 340v2M140.5 340v3M144.5 340v2M146.5 340v3M147.5 340v1M148.5 340v3M149.5 340v1M150.5 340v3M151.5 340v1M152.5 340v2M153.5 340v3M154.5 340v3M155.5 340v3M156.5 340v2M157.5 340v3M158.5 340v1M159.5 340v1M161.5 340v1M162.5 340v2M163.5 340v2M164.5 340v2M165.5 340v3M166.5 340v1M172.5 340v3M175.5 340v2M176.5 340v2M177.5 340v2M179.5 340v2M181.5 340v2M183.5 340v2M184.5 340v1M185.5 340v1M186.5 340v3M187.5 340v2M188.5 340v1M189.5 340v2M192.5 340v2M193.5 340v2M195.5 340v1M196.5 340v3M197.5 340v2M198.5 340v2M202.5 340v1M203.5 340v3M204.5 340v1M205.5 340v3M206.5 340v2M207.5 340v2M208.5 340v1M210.5 340v3M211.5 340v2M212.5 340v2M214.5 340v1M215.5 340v1M220.5 340v2M221.5 340v2M223.5 340v1M227.5 340v2M232.5 340v2M233.5 340v2M234.5 340v1M235.5 340v2M238.5 340v2M241.5 340v3M242.5 340v1M243.5 340v3M248.5 340v1M250.5 340v3M251.5 340v2M253.5 340v2M254.5 340v2M255.5 340v3M257.5 340v1M260.5 340v1M261.5 340v2M262.5 340v2M264.5 340v1M265.5 340v3M266.5 340v3M267.5 340v2M268.5 340v3M270.5 340v2M273.5 340v2M274.5 340v2M275.5 340v3M276.5 340v2M278.5 340v2M279.5 340v2M280.5 340v3M281.5 340v2M282.5 340v1M285.5 340v2M287.5 340v3M288.5 340v2M290.5 340v2M291.5 340v3M292.5 340v3M293.5 340v2M296.5 340v2M299.5 340v1M300.5 340v2M303.5 340v2M307.5 340v2M309.5 340v2M310.5 340v2M312.5 340v1M313.5 340v2M314.5 340v1M315.5 340v2M316.5 340v1M318.5 340v2M320.5 340v3M321.5 340v2M322.5 340v2M324.5 340v1M325.5 340v2M326.5 340v2M327.5 340v2M328.5 340v2M329.5 340v2M330.5 340v2M331.5 340v3M333.5 340v1M334.5 340v3M336.5 340v1M337.5 340v2M341.5 340v2M342.5 340v2M343.5 340v2M344.5 340v1M345.5 340v3M346.5 340v2M347.5 340v2M348.5 340v2M349.5 340v2M350.5 340v2M351.5 340v3M352.5 340v2M354.5 340v3M355.5 340v2M356.5 340v3M358.5 340v1M359.5 340v1M360.5 340v2M364.5 340v2M366.5 340v1M367.5 340v1M369.5 340v2M370.5 340v3M371.5 340v2M372.5 340v2M374.5 340v2M376.5 340v2M377.5 340v1M380.5 340v2M387.5 340v1M389.5 340v3M391.5 340v2M393.5 340v2M394.5 340v3M395.5 340v2M396.5 340v1M397.5 340v1M398.5 340v2M400.5 340v1M402.5 340v3M404.5 340v1M405.5 340v2M406.5 340v2M408.5 340v2M409.5 340v2M410.5 340v2M413.5 340v2M414.5 340v3M416.5 340v1M417.5 340v2M418.5 340v2M421.5 340v2M423.5 340v2M427.5 340v2M430.5 340v2M432.5 340v2M435.5 340v1M436.5 340v2M437.5 340v2M439.5 340v2M441.5 340v3M443.5 340v2M444.5 340v2M445.5 340v1M447.5 340v1M448.5 340v3M449.5 340v2M450.5 340v3M451.5 340v2M454.5 340v1M456.5 340v3M460.5 340v3M461.5 340v3M463.5 340v2M464.5 340v3M470.5 340v3M475.5 340v1M476.5 340v2M477.5 340v1M478.5 340v2M479.5 340v2M480.5 340v3M481.5 340v2M483.5 340v2M484.5 340v3M485.5 340v3M486.5 340v1M487.5 340v1M488.5 340v1M489.5 340v1M490.5 340v3M492.5 340v2M495.5 340v2M500.5 340v2M503.5 340v2M504.5 340v2M506.5 340v3M507.5 340v2M511.5 340v2M512.5 340v2M514.5 340v2M516.5 340v2M517.5 340v1M519.5 340v1M520.5 340v3M521.5 340v2M522.5 340v2M523.5 340v1M524.5 340v2M525.5 340v1M526.5 340v2M527.5 340v2M529.5 340v1M530.5 340v2M531.5 340v2M533.5 340v1M534.5 340v3M535.5 340v2M536.5 340v3M540.5 340v3M541.5 340v2M542.5 340v1M543.5 340v2M544.5 340v2M545.5 340v2M546.5 340v1M549.5 340v3M551.5 340v3M554.5 340v3M556.5 340v3M559.5 340v3M560.5 340v1M562.5 340v3M563.5 340v1M564.5 340v1M565.5 340v3M567.5 340v2M570.5 340v3M571.5 340v3M573.5 340v1M574.5 340v2M575.5 340v3M581.5 340v3M582.5 340v2M583.5 340v3M584.5 340v1M585.5 340v2M586.5 340v3M587.5 340v2M589.5 340v2M590.5 340v3M592.5 340v2M594.5 340v2M595.5 340v2M596.5 340v3M597.5 340v3M599.5 340v1M600.5 340v2M602.5 340v2M603.5 340v2M604.5 340v1M606.5 340v2M608.5 340v3M610.5 340v3M611.5 340v2M612.5 340v2M613.5 340v2M614.5 340v2M615.5 340v2M617.5 340v1M618.5 340v2M621.5 340v2M622.5 340v1M623.5 340v1M624.5 340v1M625.5 340v1M626.5 340v2M627.5 340v3M629.5 340v2M631.5 340v2M632.5 340v1M633.5 340v2M635.5 340v3M637.5 340v1M639.5 340v2M640.5 340v2M641.5 340v3M643.5 340v2M644.5 340v2M645.5 340v3M646.5 340v3M647.5 340v2M650.5 340v3M651.5 340v3M652.5 340v2M653.5 340v1M654.5 340v2M655.5 340v1M658.5 340v2M660.5 340v1M662.5 340v2M664.5 340v3M665.5 340v2M670.5 340v2M671.5 340v2M672.5 340v3M673.5 340v3M674.5 340v2M677.5 340v2M678.5 340v3M679.5 340v1M680.5 340v3M682.5 340v3M683.5 340v3M684.5 340v1M690.5 340v1M691.5 340v2M692.5 340v1M694.5 340v2M697.5 340v2M698.5 340v1M700.5 340v2M701.5 340v3M703.5 340v3M705.5 340v2M706.5 340v2M707.5 340v3M708.5 340v3M710.5 340v3M714.5 340v3M715.5 340v1M717.5 340v2M719.5 340v2M720.5 340v2M721.5 340v2M722.5 340v2M723.5 340v2M726.5 340v2M728.5 340v3M729.5 340v1M730.5 340v2M731.5 340v2M732.5 340v2M733.5 340v2M734.5 340v3M735.5 340v2M736.5 340v2M737.5 340v3M739.5 340v2M741.5 340v3M742.5 340v3M743.5 340v2M744.5 340v2M745.5 340v2M746.5 340v1M748.5 340v1M751.5 340v1M753.5 340v2M757.5 340v2M758.5 340v3M759.5 340v3M760.5 340v3M762.5 340v2M763.5 340v3M764.5 340v2M765.5 340v2M766.5 340v2M769.5 340v2M771.5 340v1M773.5 340v1M775.5 340v3M776.5 340v2M777.5 340v2M779.5 340v1M780.5 340v2M781.5 340v2M785.5 340v2M787.5 340v2M791.5 340v3M792.5 340v1M795.5 340v3M796.5 340v2M798.5 340v3M799.5 340v1M800.5 340v2M801.5 340v2M803.5 340v1M806.5 340v3M809.5 340v2M810.5 340v1M812.5 340v2M817.5 340v3M819.5 340v3M820.5 340v3M821.5 340v2M822.5 340v2M829.5 340v3M830.5 340v3M831.5 340v3M833.5 340v2M834.5 340v3M835.5 340v2M836.5 340v2M837.5 340v2M840.5 340v3M842.5 340v2M844.5 340v3M846.5 340v2M848.5 340v2M849.5 340v2M850.5 340v3M851.5 340v2M852.5 340v1M854.5 340v2M857.5 340v2M861.5 340v1M862.5 340v2M863.5 340v3M866.5 340v2M867.5 340v2M868.5 340v1M869.5 340v2M871.5 340v2M872.5 340v1M873.5 340v2M874.5 340v3M875.5 340v2M876.5 340v2M877.5 340v2M878.5 340v2M879.5 340v2M881.5 340v2M882.5 340v2M884.5 340v1M885.5 340v3M886.5 340v2M887.5 340v2M888.5 340v2M891.5 340v1M892.5 340v1M894.5 340v1M895.5 340v1M897.5 340v3M898.5 340v2M899.5 340v2M900.5 340v2M904.5 340v1M906.5 340v3M907.5 340v1M908.5 340v2M909.5 340v3M911.5 340v2M913.5 340v3M914.5 340v2M915.5 340v2M916.5 340v2M917.5 340v2M918.5 340v2M919.5 340v2M920.5 340v1M921.5 340v2M922.5 340v3M923.5 340v3M924.5 340v3M925.5 340v2M926.5 340v2M927.5 340v1M928.5 340v2M929.5 340v2M930.5 340v2M932.5 340v3M934.5 340v2M936.5 340v1M937.5 340v3M939.5 340v2M943.5 340v1M944.5 340v3M945.5 340v3M946.5 340v3M947.5 340v3M949.5 340v1M950.5 340v3M951.5 340v1M952.5 340v2M953.5 340v3M954.5 340v2M956.5 340v3M958.5 340v2M961.5 340v2M967.5 340v2M968.5 340v1M970.5 340v2M971.5 340v1M973.5 340v2M975.5 340v1M976.5 340v3M978.5 340v3M981.5 340v1M983.5 340v2M984.5 340v2M985.5 340v2M987.5 340v2M988.5 340v2M990.5 340v3M992.5 340v2M993.5 340v2" stroke="#b8fbf6" stroke-width="1" fill="none"/><path d="M24 488.5H64.5V426.5H162.5V488.5H259.5V426.5H357.5V488.5H454.5V426.5H552.5V488.5H649.5V426.5H747.5V488.5H844.5V426.5H942.5V488.5H996" stroke="#f020f0" stroke-width="2.6" fill="none"/><path d="M69.5 426v-1M70.5 426v-5M71.5 426v-5M72.5 426v-5M73.5 426v-1M75.5 426v-1M77.5 426v-5M78.5 426v-2M81.5 426v-5M84.5 426v-2M85.5 426v-2M90.5 426v-5M94.5 426v-1M102.5 426v-2M104.5 426v-5M110.5 426v-5M113.5 426v-4M116.5 426v-5M128.5 426v-3M132.5 426v-4M139.5 426v-3M140.5 426v-2M144.5 426v-4M149.5 426v-4M153.5 426v-1M154.5 426v-2M156.5 426v-5M157.5 426v-3M158.5 426v-4M172.5 488v-1M224.5 488v-1M228.5 488v-1M244.5 488v-1M252.5 488v-2M266.5 426v-4M270.5 426v-1M276.5 426v-5M281.5 426v-1M283.5 426v-3M286.5 426v-5M289.5 426v-2M293.5 426v-5M299.5 426v-5M306.5 426v-2M312.5 426v-3M314.5 426v-1M319.5 426v-3M320.5 426v-4M323.5 426v-2M324.5 426v-2M325.5 426v-5M328.5 426v-5M333.5 426v-1M336.5 426v-2M340.5 426v-3M341.5 426v-5M342.5 426v-5M346.5 426v-3M353.5 426v-2M359.5 488v-2M375.5 488v-1M407.5 488v-1M467.5 426v-5M469.5 426v-4M470.5 426v-1M475.5 426v-3M478.5 426v-3M479.5 426v-2M481.5 426v-1M486.5 426v-4M491.5 426v-3M492.5 426v-5M497.5 426v-1M498.5 426v-2M500.5 426v-3M501.5 426v-2M502.5 426v-2M512.5 426v-2M514.5 426v-1M517.5 426v-2M518.5 426v-1M523.5 426v-2M524.5 426v-2M527.5 426v-2M528.5 426v-3M531.5 426v-4M533.5 426v-3M536.5 426v-1M539.5 426v-4M540.5 426v-4M541.5 426v-4M547.5 426v-2M570.5 488v-1M574.5 488v-2M582.5 488v-2M654.5 426v-4M655.5 426v-3M657.5 426v-5M659.5 426v-1M660.5 426v-5M661.5 426v-1M662.5 426v-2M663.5 426v-5M665.5 426v-5M669.5 426v-5M671.5 426v-5M675.5 426v-5M679.5 426v-5M684.5 426v-1M685.5 426v-3M689.5 426v-1M693.5 426v-1M698.5 426v-4M699.5 426v-1M701.5 426v-2M702.5 426v-4M710.5 426v-2M715.5 426v-4M716.5 426v-3M718.5 426v-2M720.5 426v-5M721.5 426v-4M723.5 426v-5M724.5 426v-1M726.5 426v-4M727.5 426v-5M730.5 426v-2M733.5 426v-1M734.5 426v-5M735.5 426v-3M736.5 426v-5M737.5 426v-1M739.5 426v-4M741.5 426v-4M757.5 488v-2M761.5 488v-2M769.5 488v-1M813.5 488v-1M817.5 488v-2M825.5 488v-2M850.5 426v-4M855.5 426v-4M859.5 426v-1M862.5 426v-4M864.5 426v-3M866.5 426v-4M869.5 426v-2M870.5 426v-5M873.5 426v-3M876.5 426v-2M877.5 426v-2M879.5 426v-2M882.5 426v-1M889.5 426v-3M896.5 426v-2M903.5 426v-4M908.5 426v-4M915.5 426v-2M924.5 426v-2M925.5 426v-1M928.5 426v-3M932.5 426v-3M936.5 426v-5M937.5 426v-5M980.5 488v-2M992.5 488v-1" stroke="#f020f0" stroke-width="1" fill="none"/><path d="M24 564.5H25.5V566.5H26.5V568.5H27.5V570.5H28.5V572.5H29.5V574.5H30.5V576.5H31.5V578.5H32.5V580.5H33.5V582.5H34.5V584.5H35.5V586.5H36.5V588.5H37.5V590.5H38.5V592.5H39.5V596.5H41.5V600.5H42.5V602.5H43.5V604.5H44.5V606.5H45.5V608.5H46.5V610.5H47.5V612.5H48.5V614.5H49.5V616.5H50.5V618.5H51.5V620.5H52.5V622.5H53.5V624.5H54.5V626.5H55.5V628.5H56.5V630.5H57.5V632.5H58.5V634.5H59.5V636.5H61.5V638.5H62.5V640.5H63.5V642.5H64.5V644.5H66.5V646.5H68.5V648.5H70.5V650.5H71.5V652.5H73.5V654.5H76.5V656.5H79.5V658.5H84.5V660.5H86.5V658.5H87.5V660.5H88.5V658.5H94.5V656.5H98.5V654.5H100.5V652.5H102.5V650.5H104.5V648.5H106.5V646.5H107.5V644.5H108.5V642.5H110.5V640.5H111.5V638.5H112.5V636.5H114.5V634.5H115.5V632.5H116.5V630.5H117.5V628.5H118.5V626.5H119.5V624.5H120.5V622.5H122.5V618.5H123.5V616.5H125.5V612.5H126.5V610.5H127.5V608.5H128.5V606.5H129.5V604.5H130.5V602.5H131.5V600.5H132.5V598.5H133.5V596.5H134.5V592.5H136.5V590.5H137.5V586.5H138.5V584.5H140.5V580.5H141.5V578.5H142.5V576.5H143.5V574.5H144.5V572.5H145.5V570.5H146.5V568.5H147.5V566.5H148.5V564.5H149.5V562.5H150.5V560.5H151.5V558.5H152.5V556.5H153.5V554.5H154.5V552.5H155.5V550.5H156.5V548.5H157.5V546.5H159.5V544.5H161.5V542.5H162.5V540.5H163.5V538.5H164.5V536.5H166.5V534.5H168.5V532.5H170.5V530.5H172.5V528.5H175.5V526.5H179.5V524.5H189.5V526.5H193.5V528.5H196.5V530.5H198.5V532.5H200.5V534.5H202.5V536.5H204.5V538.5H205.5V540.5H206.5V542.5H208.5V544.5H209.5V546.5H210.5V548.5H212.5V550.5H213.5V552.5H214.5V554.5H215.5V556.5H216.5V558.5H217.5V560.5H218.5V562.5H219.5V564.5H221.5V566.5H222.5V570.5H223.5V572.5H224.5V574.5H225.5V576.5H226.5V578.5H227.5V580.5H228.5V582.5H229.5V584.5H230.5V586.5H231.5V588.5H232.5V590.5H233.5V592.5H234.5V594.5H235.5V596.5H236.5V600.5H237.5V602.5H238.5V604.5H239.5V606.5H240.5V608.5H241.5V610.5H242.5V612.5H243.5V614.5H244.5V616.5H245.5V618.5H246.5V620.5H247.5V622.5H248.5V624.5H249.5V626.5H250.5V628.5H251.5V630.5H252.5V632.5H254.5V634.5H255.5V638.5H257.5V640.5H258.5V642.5H260.5V644.5H262.5V646.5H263.5V648.5H264.5V650.5H266.5V652.5H268.5V654.5H271.5V656.5H274.5V658.5H280.5V660.5H281.5V658.5H282.5V660.5H284.5V658.5H289.5V656.5H292.5V654.5H294.5V652.5H297.5V650.5H299.5V648.5H300.5V646.5H302.5V644.5H304.5V642.5H305.5V640.5H306.5V638.5H307.5V636.5H309.5V634.5H310.5V632.5H311.5V630.5H312.5V628.5H313.5V626.5H314.5V624.5H315.5V622.5H316.5V620.5H317.5V618.5H318.5V616.5H319.5V614.5H320.5V612.5H321.5V610.5H322.5V608.5H323.5V606.5H324.5V604.5H325.5V602.5H326.5V600.5H327.5V598.5H328.5V596.5H329.5V594.5H330.5V592.5H331.5V590.5H332.5V586.5H333.5V584.5H334.5V582.5H335.5V580.5H336.5V578.5H337.5V576.5H338.5V574.5H339.5V572.5H340.5V570.5H341.5V568.5H342.5V566.5H343.5V564.5H344.5V562.5H345.5V560.5H346.5V558.5H347.5V556.5H348.5V554.5H349.5V552.5H350.5V550.5H352.5V548.5H353.5V546.5H354.5V544.5H355.5V542.5H357.5V540.5H358.5V538.5H360.5V536.5H361.5V534.5H363.5V532.5H365.5V530.5H366.5V528.5H370.5V526.5H373.5V524.5H384.5V526.5H385.5V524.5H386.5V526.5H389.5V528.5H391.5V530.5H394.5V532.5H396.5V534.5H397.5V536.5H398.5V538.5H401.5V542.5H403.5V544.5H404.5V546.5H405.5V548.5H407.5V550.5H408.5V552.5H409.5V554.5H410.5V556.5H411.5V558.5H412.5V560.5H414.5V564.5H415.5V566.5H416.5V568.5H417.5V570.5H418.5V572.5H419.5V574.5H420.5V576.5H421.5V578.5H422.5V580.5H423.5V582.5H424.5V584.5H425.5V586.5H426.5V590.5H428.5V592.5H429.5V596.5H431.5V600.5H432.5V602.5H433.5V604.5H434.5V606.5H435.5V608.5H436.5V610.5H437.5V612.5H438.5V614.5H439.5V616.5H440.5V618.5H441.5V620.5H442.5V622.5H443.5V624.5H444.5V626.5H445.5V628.5H446.5V630.5H447.5V632.5H448.5V634.5H450.5V636.5H451.5V638.5H452.5V640.5H453.5V642.5H454.5V644.5H456.5V646.5H458.5V648.5H460.5V650.5H462.5V652.5H464.5V654.5H466.5V656.5H469.5V658.5H478.5V660.5H479.5V658.5H484.5V656.5H488.5V654.5H490.5V652.5H492.5V650.5H494.5V648.5H496.5V646.5H497.5V644.5H499.5V642.5H500.5V640.5H501.5V638.5H502.5V636.5H503.5V634.5H505.5V632.5H506.5V630.5H507.5V628.5H508.5V626.5H509.5V624.5H510.5V622.5H511.5V620.5H512.5V618.5H513.5V616.5H514.5V614.5H516.5V610.5H517.5V608.5H518.5V606.5H519.5V604.5H520.5V602.5H521.5V600.5H522.5V598.5H523.5V594.5H525.5V592.5H526.5V590.5H527.5V586.5H528.5V584.5H529.5V582.5H530.5V580.5H531.5V578.5H532.5V576.5H533.5V574.5H534.5V572.5H535.5V570.5H536.5V568.5H537.5V566.5H538.5V564.5H539.5V562.5H540.5V560.5H541.5V558.5H542.5V556.5H543.5V554.5H544.5V552.5H545.5V550.5H546.5V548.5H548.5V546.5H549.5V544.5H550.5V542.5H552.5V540.5H553.5V538.5H555.5V536.5H556.5V534.5H558.5V532.5H560.5V530.5H562.5V528.5H564.5V526.5H568.5V524.5H579.5V526.5H584.5V528.5H586.5V530.5H588.5V532.5H590.5V534.5H592.5V536.5H594.5V538.5H595.5V540.5H597.5V542.5H598.5V544.5H599.5V546.5H600.5V548.5H602.5V550.5H603.5V552.5H604.5V554.5H605.5V556.5H606.5V558.5H607.5V560.5H608.5V562.5H609.5V564.5H610.5V566.5H612.5V570.5H613.5V572.5H615.5V576.5H616.5V578.5H617.5V580.5H618.5V582.5H619.5V584.5H620.5V586.5H621.5V588.5H622.5V590.5H623.5V592.5H624.5V594.5H625.5V596.5H626.5V600.5H627.5V602.5H628.5V604.5H629.5V606.5H630.5V608.5H631.5V610.5H632.5V612.5H633.5V614.5H634.5V616.5H635.5V618.5H636.5V620.5H637.5V622.5H638.5V624.5H639.5V626.5H640.5V628.5H641.5V630.5H642.5V632.5H643.5V634.5H645.5V638.5H647.5V640.5H648.5V642.5H650.5V644.5H651.5V646.5H653.5V648.5H655.5V650.5H656.5V652.5H659.5V654.5H661.5V656.5H664.5V658.5H668.5V660.5H669.5V658.5H672.5V660.5H673.5V658.5H679.5V656.5H683.5V654.5H685.5V652.5H687.5V650.5H689.5V648.5H690.5V646.5H692.5V644.5H693.5V642.5H695.5V640.5H696.5V638.5H698.5V636.5H699.5V634.5H700.5V632.5H701.5V630.5H702.5V628.5H703.5V626.5H704.5V624.5H705.5V622.5H706.5V620.5H707.5V618.5H708.5V616.5H709.5V614.5H710.5V612.5H711.5V610.5H712.5V608.5H713.5V606.5H714.5V604.5H715.5V602.5H716.5V600.5H717.5V598.5H718.5V596.5H719.5V594.5H720.5V592.5H721.5V588.5H723.5V584.5H725.5V580.5H726.5V578.5H727.5V576.5H728.5V574.5H729.5V572.5H730.5V570.5H731.5V568.5H732.5V566.5H733.5V564.5H734.5V562.5H735.5V560.5H736.5V558.5H737.5V556.5H738.5V554.5H739.5V552.5H740.5V550.5H742.5V548.5H743.5V546.5H744.5V544.5H745.5V542.5H747.5V540.5H748.5V538.5H749.5V536.5H751.5V534.5H753.5V532.5H755.5V530.5H757.5V528.5H759.5V526.5H765.5V524.5H776.5V526.5H779.5V528.5H781.5V530.5H783.5V532.5H785.5V534.5H787.5V536.5H789.5V538.5H790.5V540.5H791.5V542.5H793.5V544.5H794.5V546.5H796.5V548.5H797.5V550.5H798.5V552.5H799.5V554.5H800.5V556.5H801.5V558.5H803.5V562.5H804.5V564.5H805.5V566.5H806.5V568.5H807.5V570.5H808.5V572.5H809.5V574.5H810.5V576.5H811.5V578.5H812.5V580.5H813.5V582.5H814.5V584.5H815.5V586.5H816.5V588.5H817.5V590.5H818.5V594.5H819.5V596.5H821.5V600.5H822.5V602.5H823.5V604.5H824.5V606.5H825.5V608.5H826.5V610.5H827.5V612.5H828.5V614.5H829.5V616.5H830.5V618.5H831.5V620.5H832.5V622.5H833.5V624.5H834.5V626.5H835.5V628.5H836.5V630.5H837.5V632.5H838.5V634.5H839.5V636.5H841.5V638.5H842.5V640.5H843.5V642.5H845.5V644.5H846.5V646.5H848.5V648.5H849.5V650.5H851.5V652.5H853.5V654.5H857.5V656.5H858.5V658.5H864.5V660.5H865.5V658.5H866.5V660.5H867.5V658.5H873.5V656.5H877.5V654.5H879.5V652.5H882.5V650.5H883.5V648.5H886.5V646.5H887.5V644.5H889.5V642.5H890.5V640.5H891.5V638.5H892.5V636.5H894.5V634.5H895.5V632.5H896.5V630.5H897.5V628.5H898.5V626.5H900.5V622.5H902.5V618.5H903.5V616.5H904.5V614.5H906.5V612.5H907.5V608.5H908.5V606.5H909.5V604.5H910.5V602.5H911.5V600.5H912.5V598.5H913.5V596.5H914.5V592.5H916.5V588.5H917.5V586.5H919.5V582.5H920.5V580.5H921.5V578.5H922.5V576.5H923.5V574.5H924.5V572.5H925.5V570.5H926.5V568.5H927.5V566.5H928.5V564.5H929.5V562.5H930.5V560.5H931.5V558.5H932.5V556.5H933.5V554.5H934.5V552.5H936.5V548.5H938.5V546.5H939.5V544.5H940.5V542.5H941.5V540.5H943.5V538.5H944.5V536.5H946.5V534.5H948.5V532.5H950.5V530.5H952.5V528.5H955.5V526.5H958.5V524.5H970.5V526.5H973.5V528.5H975.5V530.5H979.5V532.5H980.5V534.5H982.5V536.5H983.5V538.5H985.5V540.5H986.5V542.5H988.5V544.5H989.5V546.5H991.5V548.5H992.5V550.5H993.5V552.5H994.5V554.5H995.5V556.5H996.5V558.5H996" stroke="#b0f058" stroke-width="2.6" fill="none"/></g><path d="M24 217.5H27.5V220.5H31.5V222.5H34.5V225.5H36.5V227.5H40.5V230.5H44.5V232.5H48.5V235.5H50.5V237.5H54.5V240.5H59.5V242.5H64.5V245.5H65.5V242.5H67.5V240.5H71.5V237.5H76.5V235.5H79.5V232.5H83.5V230.5H85.5V227.5H88.5V225.5H92.5V222.5H95.5V220.5H99.5V217.5H103.5V215.5H106.5V212.5H107.5V215.5H108.5V212.5H109.5V210.5H113.5V207.5H116.5V205.5H117.5V207.5H118.5V205.5H121.5V202.5H124.5V200.5H129.5V197.5H132.5V195.5H135.5V192.5H137.5V190.5H142.5V187.5H145.5V185.5H149.5V182.5H151.5V180.5H152.5V182.5H154.5V180.5H156.5V177.5H159.5V175.5H161.5V177.5H164.5V180.5H165.5V177.5H166.5V180.5H169.5V182.5H173.5V185.5H176.5V187.5H178.5V190.5H183.5V192.5H187.5V195.5H190.5V197.5H194.5V200.5H196.5V202.5H200.5V205.5H204.5V207.5H206.5V210.5H207.5V207.5H209.5V210.5H210.5V212.5H213.5V215.5H217.5V217.5H222.5V220.5H226.5V222.5H228.5V225.5H231.5V227.5H235.5V230.5H236.5V227.5H237.5V230.5H239.5V232.5H243.5V235.5H245.5V237.5H250.5V240.5H253.5V242.5H256.5V245.5H257.5V242.5H258.5V245.5H260.5V242.5H262.5V240.5H267.5V237.5H269.5V235.5H274.5V232.5H276.5V230.5H280.5V227.5H283.5V225.5H287.5V222.5H291.5V220.5H295.5V217.5H298.5V215.5H302.5V212.5H305.5V210.5H308.5V207.5H313.5V205.5H315.5V202.5H320.5V200.5H323.5V197.5H326.5V195.5H329.5V192.5H333.5V190.5H336.5V187.5H337.5V190.5H338.5V187.5H341.5V185.5H343.5V182.5H344.5V185.5H345.5V182.5H347.5V180.5H350.5V177.5H354.5V175.5H357.5V177.5H360.5V180.5H365.5V182.5H366.5V185.5H370.5V187.5H374.5V190.5H379.5V192.5H380.5V195.5H385.5V197.5H389.5V200.5H391.5V202.5H395.5V205.5H400.5V207.5H403.5V210.5H405.5V212.5H406.5V210.5H407.5V212.5H409.5V215.5H412.5V217.5H416.5V220.5H419.5V222.5H423.5V225.5H426.5V227.5H427.5V225.5H428.5V227.5H431.5V230.5H433.5V232.5H434.5V230.5H435.5V232.5H438.5V235.5H441.5V237.5H445.5V240.5H449.5V242.5H452.5V245.5H454.5V242.5H458.5V240.5H461.5V237.5H465.5V235.5H469.5V232.5H473.5V230.5H475.5V227.5H479.5V225.5H483.5V222.5H486.5V220.5H489.5V217.5H493.5V215.5H496.5V212.5H501.5V210.5H503.5V207.5H507.5V205.5H511.5V202.5H514.5V200.5H518.5V197.5H520.5V195.5H524.5V192.5H529.5V190.5H531.5V187.5H535.5V185.5H539.5V182.5H543.5V180.5H546.5V177.5H549.5V175.5H552.5V177.5H555.5V180.5H559.5V182.5H563.5V185.5H566.5V187.5H568.5V190.5H569.5V187.5H570.5V190.5H573.5V192.5H576.5V195.5H579.5V197.5H582.5V200.5H586.5V202.5H589.5V205.5H595.5V207.5H598.5V210.5H601.5V212.5H605.5V215.5H609.5V217.5H612.5V220.5H616.5V222.5H618.5V225.5H619.5V222.5H620.5V225.5H623.5V227.5H627.5V230.5H629.5V232.5H633.5V235.5H637.5V237.5H639.5V240.5H640.5V237.5H641.5V240.5H644.5V242.5H648.5V245.5H649.5V242.5H653.5V240.5H657.5V237.5H659.5V235.5H663.5V232.5H666.5V230.5H671.5V227.5H675.5V225.5H677.5V222.5H681.5V220.5H684.5V217.5H689.5V215.5H692.5V212.5H695.5V210.5H699.5V207.5H701.5V205.5H702.5V207.5H703.5V205.5H705.5V202.5H709.5V200.5H713.5V197.5H717.5V195.5H721.5V192.5H723.5V190.5H727.5V187.5H729.5V185.5H733.5V182.5H737.5V180.5H740.5V177.5H745.5V175.5H746.5V177.5H750.5V180.5H753.5V182.5H757.5V185.5H760.5V187.5H763.5V190.5H764.5V187.5H765.5V190.5H768.5V192.5H770.5V195.5H771.5V192.5H772.5V195.5H774.5V197.5H775.5V195.5H776.5V197.5H779.5V200.5H782.5V202.5H786.5V205.5H790.5V207.5H792.5V210.5H795.5V212.5H800.5V215.5H802.5V217.5H806.5V220.5H809.5V222.5H810.5V220.5H811.5V222.5H814.5V225.5H817.5V227.5H821.5V230.5H825.5V232.5H829.5V235.5H831.5V237.5H836.5V240.5H838.5V242.5H841.5V245.5H845.5V242.5H847.5V240.5H850.5V237.5H854.5V235.5H859.5V232.5H861.5V230.5H865.5V227.5H868.5V225.5H872.5V222.5H876.5V220.5H880.5V217.5H884.5V215.5H887.5V212.5H889.5V210.5H893.5V207.5H897.5V205.5H900.5V202.5H904.5V200.5H908.5V197.5H911.5V195.5H914.5V192.5H915.5V195.5H916.5V192.5H919.5V190.5H922.5V187.5H926.5V185.5H929.5V182.5H933.5V180.5H935.5V177.5H939.5V175.5H940.5V177.5H946.5V180.5H947.5V182.5H948.5V180.5H949.5V182.5H952.5V185.5H955.5V187.5H959.5V190.5H963.5V192.5H967.5V195.5H969.5V197.5H970.5V195.5H971.5V197.5H973.5V200.5H976.5V202.5H977.5V200.5H978.5V202.5H980.5V205.5H981.5V202.5H982.5V205.5H984.5V207.5H987.5V210.5H992.5V212.5H993.5V215.5H994.5V212.5H995.5V215.5H996" stroke="#fafa6a" stroke-width="1.2" fill="none"/><path d="M24 339.5H110.5V266.5H130.5V339.5H305.5V266.5H325.5V339.5H500.5V266.5H520.5V339.5H695.5V266.5H715.5V339.5H890.5V266.5H910.5V339.5H996" stroke="#b8fbf6" stroke-width="1.2" fill="none"/><path d="M112.5 267v5M113.5 267v5M114.5 267v5M116.5 267v2M117.5 267v3M118.5 267v5M120.5 267v5M121.5 267v5M122.5 267v5M123.5 267v5M124.5 267v2M125.5 267v3M126.5 267v5M128.5 267v5M306.5 267v4M307.5 267v5M308.5 267v5M310.5 267v2M312.5 267v5M313.5 267v2M314.5 267v2M315.5 267v4M317.5 267v2M318.5 267v2M319.5 267v5M320.5 267v2M322.5 267v4M323.5 267v4M502.5 267v2M503.5 267v5M504.5 267v2M505.5 267v5M506.5 267v5M507.5 267v5M509.5 267v5M510.5 267v2M511.5 267v3M512.5 267v5M513.5 267v2M515.5 267v5M516.5 267v2M517.5 267v3M518.5 267v4M696.5 267v5M697.5 267v4M698.5 267v2M699.5 267v5M700.5 267v2M701.5 267v4M705.5 267v3M707.5 267v5M708.5 267v3M710.5 267v3M712.5 267v5M713.5 267v2M891.5 267v2M892.5 267v4M893.5 267v5M895.5 267v5M896.5 267v5M898.5 267v3M899.5 267v5M900.5 267v5M901.5 267v4M902.5 267v3M903.5 267v2M904.5 267v5M905.5 267v2M906.5 267v4M907.5 267v3M27.5 340v2M28.5 340v1M29.5 340v2M32.5 340v1M33.5 340v2M34.5 340v1M35.5 340v2M42.5 340v3M45.5 340v1M47.5 340v3M48.5 340v1M50.5 340v1M54.5 340v3M55.5 340v1M56.5 340v1M57.5 340v1M58.5 340v2M60.5 340v3M61.5 340v1M62.5 340v2M64.5 340v2M66.5 340v3M67.5 340v2M68.5 340v2M69.5 340v3M72.5 340v2M73.5 340v2M74.5 340v2M75.5 340v1M78.5 340v2M79.5 340v3M80.5 340v2M82.5 340v3M87.5 340v1M88.5 340v1M90.5 340v2M91.5 340v1M93.5 340v2M94.5 340v2M95.5 340v2M98.5 340v1M104.5 340v3M105.5 340v1M107.5 340v1M108.5 340v2M110.5 340v2M111.5 340v2M112.5 340v3M113.5 340v3M114.5 340v1M115.5 340v2M116.5 340v2M117.5 340v1M118.5 340v3M121.5 340v2M122.5 340v1M123.5 340v1M124.5 340v2M125.5 340v2M126.5 340v1M127.5 340v1M128.5 340v1M129.5 340v2M132.5 340v3M134.5 340v1M136.5 340v2M138.5 340v2M139.5 340v2M140.5 340v3M144.5 340v2M146.5 340v3M147.5 340v1M148.5 340v3M149.5 340v1M150.5 340v3M151.5 340v1M152.5 340v2M153.5 340v3M154.5 340v3M155.5 340v3M156.5 340v2M157.5 340v3M158.5 340v1M159.5 340v1M161.5 340v1M162.5 340v2M163.5 340v2M164.5 340v2M165.5 340v3M166.5 340v1M172.5 340v3M175.5 340v2M176.5 340v2M177.5 340v2M179.5 340v2M181.5 340v2M183.5 340v2M184.5 340v1M185.5 340v1M186.5 340v3M187.5 340v2M188.5 340v1M189.5 340v2M192.5 340v2M193.5 340v2M195.5 340v1M196.5 340v3M197.5 340v2M198.5 340v2M202.5 340v1M203.5 340v3M204.5 340v1M205.5 340v3M206.5 340v2M207.5 340v2M208.5 340v1M210.5 340v3M211.5 340v2M212.5 340v2M214.5 340v1M215.5 340v1M220.5 340v2M221.5 340v2M223.5 340v1M227.5 340v2M232.5 340v2M233.5 340v2M234.5 340v1M235.5 340v2M238.5 340v2M241.5 340v3M242.5 340v1M243.5 340v3M248.5 340v1M250.5 340v3M251.5 340v2M253.5 340v2M254.5 340v2M255.5 340v3M257.5 340v1M260.5 340v1M261.5 340v2M262.5 340v2M264.5 340v1M265.5 340v3M266.5 340v3M267.5 340v2M268.5 340v3M270.5 340v2M273.5 340v2M274.5 340v2M275.5 340v3M276.5 340v2M278.5 340v2M279.5 340v2M280.5 340v3M281.5 340v2M282.5 340v1M285.5 340v2M287.5 340v3M288.5 340v2M290.5 340v2M291.5 340v3M292.5 340v3M293.5 340v2M296.5 340v2M299.5 340v1M300.5 340v2M303.5 340v2M307.5 340v2M309.5 340v2M310.5 340v2M312.5 340v1M313.5 340v2M314.5 340v1M315.5 340v2M316.5 340v1M318.5 340v2M320.5 340v3M321.5 340v2M322.5 340v2M324.5 340v1M325.5 340v2M326.5 340v2M327.5 340v2M328.5 340v2M329.5 340v2M330.5 340v2M331.5 340v3M333.5 340v1M334.5 340v3M336.5 340v1M337.5 340v2M341.5 340v2M342.5 340v2M343.5 340v2M344.5 340v1M345.5 340v3M346.5 340v2M347.5 340v2M348.5 340v2M349.5 340v2M350.5 340v2M351.5 340v3M352.5 340v2M354.5 340v3M355.5 340v2M356.5 340v3M358.5 340v1M359.5 340v1M360.5 340v2M364.5 340v2M366.5 340v1M367.5 340v1M369.5 340v2M370.5 340v3M371.5 340v2M372.5 340v2M374.5 340v2M376.5 340v2M377.5 340v1M380.5 340v2M387.5 340v1M389.5 340v3M391.5 340v2M393.5 340v2M394.5 340v3M395.5 340v2M396.5 340v1M397.5 340v1M398.5 340v2M400.5 340v1M402.5 340v3M404.5 340v1M405.5 340v2M406.5 340v2M408.5 340v2M409.5 340v2M410.5 340v2M413.5 340v2M414.5 340v3M416.5 340v1M417.5 340v2M418.5 340v2M421.5 340v2M423.5 340v2M427.5 340v2M430.5 340v2M432.5 340v2M435.5 340v1M436.5 340v2M437.5 340v2M439.5 340v2M441.5 340v3M443.5 340v2M444.5 340v2M445.5 340v1M447.5 340v1M448.5 340v3M449.5 340v2M450.5 340v3M451.5 340v2M454.5 340v1M456.5 340v3M460.5 340v3M461.5 340v3M463.5 340v2M464.5 340v3M470.5 340v3M475.5 340v1M476.5 340v2M477.5 340v1M478.5 340v2M479.5 340v2M480.5 340v3M481.5 340v2M483.5 340v2M484.5 340v3M485.5 340v3M486.5 340v1M487.5 340v1M488.5 340v1M489.5 340v1M490.5 340v3M492.5 340v2M495.5 340v2M500.5 340v2M503.5 340v2M504.5 340v2M506.5 340v3M507.5 340v2M511.5 340v2M512.5 340v2M514.5 340v2M516.5 340v2M517.5 340v1M519.5 340v1M520.5 340v3M521.5 340v2M522.5 340v2M523.5 340v1M524.5 340v2M525.5 340v1M526.5 340v2M527.5 340v2M529.5 340v1M530.5 340v2M531.5 340v2M533.5 340v1M534.5 340v3M535.5 340v2M536.5 340v3M540.5 340v3M541.5 340v2M542.5 340v1M543.5 340v2M544.5 340v2M545.5 340v2M546.5 340v1M549.5 340v3M551.5 340v3M554.5 340v3M556.5 340v3M559.5 340v3M560.5 340v1M562.5 340v3M563.5 340v1M564.5 340v1M565.5 340v3M567.5 340v2M570.5 340v3M571.5 340v3M573.5 340v1M574.5 340v2M575.5 340v3M581.5 340v3M582.5 340v2M583.5 340v3M584.5 340v1M585.5 340v2M586.5 340v3M587.5 340v2M589.5 340v2M590.5 340v3M592.5 340v2M594.5 340v2M595.5 340v2M596.5 340v3M597.5 340v3M599.5 340v1M600.5 340v2M602.5 340v2M603.5 340v2M604.5 340v1M606.5 340v2M608.5 340v3M610.5 340v3M611.5 340v2M612.5 340v2M613.5 340v2M614.5 340v2M615.5 340v2M617.5 340v1M618.5 340v2M621.5 340v2M622.5 340v1M623.5 340v1M624.5 340v1M625.5 340v1M626.5 340v2M627.5 340v3M629.5 340v2M631.5 340v2M632.5 340v1M633.5 340v2M635.5 340v3M637.5 340v1M639.5 340v2M640.5 340v2M641.5 340v3M643.5 340v2M644.5 340v2M645.5 340v3M646.5 340v3M647.5 340v2M650.5 340v3M651.5 340v3M652.5 340v2M653.5 340v1M654.5 340v2M655.5 340v1M658.5 340v2M660.5 340v1M662.5 340v2M664.5 340v3M665.5 340v2M670.5 340v2M671.5 340v2M672.5 340v3M673.5 340v3M674.5 340v2M677.5 340v2M678.5 340v3M679.5 340v1M680.5 340v3M682.5 340v3M683.5 340v3M684.5 340v1M690.5 340v1M691.5 340v2M692.5 340v1M694.5 340v2M697.5 340v2M698.5 340v1M700.5 340v2M701.5 340v3M703.5 340v3M705.5 340v2M706.5 340v2M707.5 340v3M708.5 340v3M710.5 340v3M714.5 340v3M715.5 340v1M717.5 340v2M719.5 340v2M720.5 340v2M721.5 340v2M722.5 340v2M723.5 340v2M726.5 340v2M728.5 340v3M729.5 340v1M730.5 340v2M731.5 340v2M732.5 340v2M733.5 340v2M734.5 340v3M735.5 340v2M736.5 340v2M737.5 340v3M739.5 340v2M741.5 340v3M742.5 340v3M743.5 340v2M744.5 340v2M745.5 340v2M746.5 340v1M748.5 340v1M751.5 340v1M753.5 340v2M757.5 340v2M758.5 340v3M759.5 340v3M760.5 340v3M762.5 340v2M763.5 340v3M764.5 340v2M765.5 340v2M766.5 340v2M769.5 340v2M771.5 340v1M773.5 340v1M775.5 340v3M776.5 340v2M777.5 340v2M779.5 340v1M780.5 340v2M781.5 340v2M785.5 340v2M787.5 340v2M791.5 340v3M792.5 340v1M795.5 340v3M796.5 340v2M798.5 340v3M799.5 340v1M800.5 340v2M801.5 340v2M803.5 340v1M806.5 340v3M809.5 340v2M810.5 340v1M812.5 340v2M817.5 340v3M819.5 340v3M820.5 340v3M821.5 340v2M822.5 340v2M829.5 340v3M830.5 340v3M831.5 340v3M833.5 340v2M834.5 340v3M835.5 340v2M836.5 340v2M837.5 340v2M840.5 340v3M842.5 340v2M844.5 340v3M846.5 340v2M848.5 340v2M849.5 340v2M850.5 340v3M851.5 340v2M852.5 340v1M854.5 340v2M857.5 340v2M861.5 340v1M862.5 340v2M863.5 340v3M866.5 340v2M867.5 340v2M868.5 340v1M869.5 340v2M871.5 340v2M872.5 340v1M873.5 340v2M874.5 340v3M875.5 340v2M876.5 340v2M877.5 340v2M878.5 340v2M879.5 340v2M881.5 340v2M882.5 340v2M884.5 340v1M885.5 340v3M886.5 340v2M887.5 340v2M888.5 340v2M891.5 340v1M892.5 340v1M894.5 340v1M895.5 340v1M897.5 340v3M898.5 340v2M899.5 340v2M900.5 340v2M904.5 340v1M906.5 340v3M907.5 340v1M908.5 340v2M909.5 340v3M911.5 340v2M913.5 340v3M914.5 340v2M915.5 340v2M916.5 340v2M917.5 340v2M918.5 340v2M919.5 340v2M920.5 340v1M921.5 340v2M922.5 340v3M923.5 340v3M924.5 340v3M925.5 340v2M926.5 340v2M927.5 340v1M928.5 340v2M929.5 340v2M930.5 340v2M932.5 340v3M934.5 340v2M936.5 340v1M937.5 340v3M939.5 340v2M943.5 340v1M944.5 340v3M945.5 340v3M946.5 340v3M947.5 340v3M949.5 340v1M950.5 340v3M951.5 340v1M952.5 340v2M953.5 340v3M954.5 340v2M956.5 340v3M958.5 340v2M961.5 340v2M967.5 340v2M968.5 340v1M970.5 340v2M971.5 340v1M973.5 340v2M975.5 340v1M976.5 340v3M978.5 340v3M981.5 340v1M983.5 340v2M984.5 340v2M985.5 340v2M987.5 340v2M988.5 340v2M990.5 340v3M992.5 340v2M993.5 340v2" stroke="#b8fbf6" stroke-width="1" fill="none"/><path d="M24 488.5H64.5V426.5H162.5V488.5H259.5V426.5H357.5V488.5H454.5V426.5H552.5V488.5H649.5V426.5H747.5V488.5H844.5V426.5H942.5V488.5H996" stroke="#f020f0" stroke-width="1.2" fill="none"/><path d="M69.5 426v-1M70.5 426v-5M71.5 426v-5M72.5 426v-5M73.5 426v-1M75.5 426v-1M77.5 426v-5M78.5 426v-2M81.5 426v-5M84.5 426v-2M85.5 426v-2M90.5 426v-5M94.5 426v-1M102.5 426v-2M104.5 426v-5M110.5 426v-5M113.5 426v-4M116.5 426v-5M128.5 426v-3M132.5 426v-4M139.5 426v-3M140.5 426v-2M144.5 426v-4M149.5 426v-4M153.5 426v-1M154.5 426v-2M156.5 426v-5M157.5 426v-3M158.5 426v-4M172.5 488v-1M224.5 488v-1M228.5 488v-1M244.5 488v-1M252.5 488v-2M266.5 426v-4M270.5 426v-1M276.5 426v-5M281.5 426v-1M283.5 426v-3M286.5 426v-5M289.5 426v-2M293.5 426v-5M299.5 426v-5M306.5 426v-2M312.5 426v-3M314.5 426v-1M319.5 426v-3M320.5 426v-4M323.5 426v-2M324.5 426v-2M325.5 426v-5M328.5 426v-5M333.5 426v-1M336.5 426v-2M340.5 426v-3M341.5 426v-5M342.5 426v-5M346.5 426v-3M353.5 426v-2M359.5 488v-2M375.5 488v-1M407.5 488v-1M467.5 426v-5M469.5 426v-4M470.5 426v-1M475.5 426v-3M478.5 426v-3M479.5 426v-2M481.5 426v-1M486.5 426v-4M491.5 426v-3M492.5 426v-5M497.5 426v-1M498.5 426v-2M500.5 426v-3M501.5 426v-2M502.5 426v-2M512.5 426v-2M514.5 426v-1M517.5 426v-2M518.5 426v-1M523.5 426v-2M524.5 426v-2M527.5 426v-2M528.5 426v-3M531.5 426v-4M533.5 426v-3M536.5 426v-1M539.5 426v-4M540.5 426v-4M541.5 426v-4M547.5 426v-2M570.5 488v-1M574.5 488v-2M582.5 488v-2M654.5 426v-4M655.5 426v-3M657.5 426v-5M659.5 426v-1M660.5 426v-5M661.5 426v-1M662.5 426v-2M663.5 426v-5M665.5 426v-5M669.5 426v-5M671.5 426v-5M675.5 426v-5M679.5 426v-5M684.5 426v-1M685.5 426v-3M689.5 426v-1M693.5 426v-1M698.5 426v-4M699.5 426v-1M701.5 426v-2M702.5 426v-4M710.5 426v-2M715.5 426v-4M716.5 426v-3M718.5 426v-2M720.5 426v-5M721.5 426v-4M723.5 426v-5M724.5 426v-1M726.5 426v-4M727.5 426v-5M730.5 426v-2M733.5 426v-1M734.5 426v-5M735.5 426v-3M736.5 426v-5M737.5 426v-1M739.5 426v-4M741.5 426v-4M757.5 488v-2M761.5 488v-2M769.5 488v-1M813.5 488v-1M817.5 488v-2M825.5 488v-2M850.5 426v-4M855.5 426v-4M859.5 426v-1M862.5 426v-4M864.5 426v-3M866.5 426v-4M869.5 426v-2M870.5 426v-5M873.5 426v-3M876.5 426v-2M877.5 426v-2M879.5 426v-2M882.5 426v-1M889.5 426v-3M896.5 426v-2M903.5 426v-4M908.5 426v-4M915.5 426v-2M924.5 426v-2M925.5 426v-1M928.5 426v-3M932.5 426v-3M936.5 426v-5M937.5 426v-5M980.5 488v-2M992.5 488v-1" stroke="#f020f0" stroke-width="1" fill="none"/><path d="M24 564.5H25.5V566.5H26.5V568.5H27.5V570.5H28.5V572.5H29.5V574.5H30.5V576.5H31.5V578.5H32.5V580.5H33.5V582.5H34.5V584.5H35.5V586.5H36.5V588.5H37.5V590.5H38.5V592.5H39.5V596.5H41.5V600.5H42.5V602.5H43.5V604.5H44.5V606.5H45.5V608.5H46.5V610.5H47.5V612.5H48.5V614.5H49.5V616.5H50.5V618.5H51.5V620.5H52.5V622.5H53.5V624.5H54.5V626.5H55.5V628.5H56.5V630.5H57.5V632.5H58.5V634.5H59.5V636.5H61.5V638.5H62.5V640.5H63.5V642.5H64.5V644.5H66.5V646.5H68.5V648.5H70.5V650.5H71.5V652.5H73.5V654.5H76.5V656.5H79.5V658.5H84.5V660.5H86.5V658.5H87.5V660.5H88.5V658.5H94.5V656.5H98.5V654.5H100.5V652.5H102.5V650.5H104.5V648.5H106.5V646.5H107.5V644.5H108.5V642.5H110.5V640.5H111.5V638.5H112.5V636.5H114.5V634.5H115.5V632.5H116.5V630.5H117.5V628.5H118.5V626.5H119.5V624.5H120.5V622.5H122.5V618.5H123.5V616.5H125.5V612.5H126.5V610.5H127.5V608.5H128.5V606.5H129.5V604.5H130.5V602.5H131.5V600.5H132.5V598.5H133.5V596.5H134.5V592.5H136.5V590.5H137.5V586.5H138.5V584.5H140.5V580.5H141.5V578.5H142.5V576.5H143.5V574.5H144.5V572.5H145.5V570.5H146.5V568.5H147.5V566.5H148.5V564.5H149.5V562.5H150.5V560.5H151.5V558.5H152.5V556.5H153.5V554.5H154.5V552.5H155.5V550.5H156.5V548.5H157.5V546.5H159.5V544.5H161.5V542.5H162.5V540.5H163.5V538.5H164.5V536.5H166.5V534.5H168.5V532.5H170.5V530.5H172.5V528.5H175.5V526.5H179.5V524.5H189.5V526.5H193.5V528.5H196.5V530.5H198.5V532.5H200.5V534.5H202.5V536.5H204.5V538.5H205.5V540.5H206.5V542.5H208.5V544.5H209.5V546.5H210.5V548.5H212.5V550.5H213.5V552.5H214.5V554.5H215.5V556.5H216.5V558.5H217.5V560.5H218.5V562.5H219.5V564.5H221.5V566.5H222.5V570.5H223.5V572.5H224.5V574.5H225.5V576.5H226.5V578.5H227.5V580.5H228.5V582.5H229.5V584.5H230.5V586.5H231.5V588.5H232.5V590.5H233.5V592.5H234.5V594.5H235.5V596.5H236.5V600.5H237.5V602.5H238.5V604.5H239.5V606.5H240.5V608.5H241.5V610.5H242.5V612.5H243.5V614.5H244.5V616.5H245.5V618.5H246.5V620.5H247.5V622.5H248.5V624.5H249.5V626.5H250.5V628.5H251.5V630.5H252.5V632.5H254.5V634.5H255.5V638.5H257.5V640.5H258.5V642.5H260.5V644.5H262.5V646.5H263.5V648.5H264.5V650.5H266.5V652.5H268.5V654.5H271.5V656.5H274.5V658.5H280.5V660.5H281.5V658.5H282.5V660.5H284.5V658.5H289.5V656.5H292.5V654.5H294.5V652.5H297.5V650.5H299.5V648.5H300.5V646.5H302.5V644.5H304.5V642.5H305.5V640.5H306.5V638.5H307.5V636.5H309.5V634.5H310.5V632.5H311.5V630.5H312.5V628.5H313.5V626.5H314.5V624.5H315.5V622.5H316.5V620.5H317.5V618.5H318.5V616.5H319.5V614.5H320.5V612.5H321.5V610.5H322.5V608.5H323.5V606.5H324.5V604.5H325.5V602.5H326.5V600.5H327.5V598.5H328.5V596.5H329.5V594.5H330.5V592.5H331.5V590.5H332.5V586.5H333.5V584.5H334.5V582.5H335.5V580.5H336.5V578.5H337.5V576.5H338.5V574.5H339.5V572.5H340.5V570.5H341.5V568.5H342.5V566.5H343.5V564.5H344.5V562.5H345.5V560.5H346.5V558.5H347.5V556.5H348.5V554.5H349.5V552.5H350.5V550.5H352.5V548.5H353.5V546.5H354.5V544.5H355.5V542.5H357.5V540.5H358.5V538.5H360.5V536.5H361.5V534.5H363.5V532.5H365.5V530.5H366.5V528.5H370.5V526.5H373.5V524.5H384.5V526.5H385.5V524.5H386.5V526.5H389.5V528.5H391.5V530.5H394.5V532.5H396.5V534.5H397.5V536.5H398.5V538.5H401.5V542.5H403.5V544.5H404.5V546.5H405.5V548.5H407.5V550.5H408.5V552.5H409.5V554.5H410.5V556.5H411.5V558.5H412.5V560.5H414.5V564.5H415.5V566.5H416.5V568.5H417.5V570.5H418.5V572.5H419.5V574.5H420.5V576.5H421.5V578.5H422.5V580.5H423.5V582.5H424.5V584.5H425.5V586.5H426.5V590.5H428.5V592.5H429.5V596.5H431.5V600.5H432.5V602.5H433.5V604.5H434.5V606.5H435.5V608.5H436.5V610.5H437.5V612.5H438.5V614.5H439.5V616.5H440.5V618.5H441.5V620.5H442.5V622.5H443.5V624.5H444.5V626.5H445.5V628.5H446.5V630.5H447.5V632.5H448.5V634.5H450.5V636.5H451.5V638.5H452.5V640.5H453.5V642.5H454.5V644.5H456.5V646.5H458.5V648.5H460.5V650.5H462.5V652.5H464.5V654.5H466.5V656.5H469.5V658.5H478.5V660.5H479.5V658.5H484.5V656.5H488.5V654.5H490.5V652.5H492.5V650.5H494.5V648.5H496.5V646.5H497.5V644.5H499.5V642.5H500.5V640.5H501.5V638.5H502.5V636.5H503.5V634.5H505.5V632.5H506.5V630.5H507.5V628.5H508.5V626.5H509.5V624.5H510.5V622.5H511.5V620.5H512.5V618.5H513.5V616.5H514.5V614.5H516.5V610.5H517.5V608.5H518.5V606.5H519.5V604.5H520.5V602.5H521.5V600.5H522.5V598.5H523.5V594.5H525.5V592.5H526.5V590.5H527.5V586.5H528.5V584.5H529.5V582.5H530.5V580.5H531.5V578.5H532.5V576.5H533.5V574.5H534.5V572.5H535.5V570.5H536.5V568.5H537.5V566.5H538.5V564.5H539.5V562.5H540.5V560.5H541.5V558.5H542.5V556.5H543.5V554.5H544.5V552.5H545.5V550.5H546.5V548.5H548.5V546.5H549.5V544.5H550.5V542.5H552.5V540.5H553.5V538.5H555.5V536.5H556.5V534.5H558.5V532.5H560.5V530.5H562.5V528.5H564.5V526.5H568.5V524.5H579.5V526.5H584.5V528.5H586.5V530.5H588.5V532.5H590.5V534.5H592.5V536.5H594.5V538.5H595.5V540.5H597.5V542.5H598.5V544.5H599.5V546.5H600.5V548.5H602.5V550.5H603.5V552.5H604.5V554.5H605.5V556.5H606.5V558.5H607.5V560.5H608.5V562.5H609.5V564.5H610.5V566.5H612.5V570.5H613.5V572.5H615.5V576.5H616.5V578.5H617.5V580.5H618.5V582.5H619.5V584.5H620.5V586.5H621.5V588.5H622.5V590.5H623.5V592.5H624.5V594.5H625.5V596.5H626.5V600.5H627.5V602.5H628.5V604.5H629.5V606.5H630.5V608.5H631.5V610.5H632.5V612.5H633.5V614.5H634.5V616.5H635.5V618.5H636.5V620.5H637.5V622.5H638.5V624.5H639.5V626.5H640.5V628.5H641.5V630.5H642.5V632.5H643.5V634.5H645.5V638.5H647.5V640.5H648.5V642.5H650.5V644.5H651.5V646.5H653.5V648.5H655.5V650.5H656.5V652.5H659.5V654.5H661.5V656.5H664.5V658.5H668.5V660.5H669.5V658.5H672.5V660.5H673.5V658.5H679.5V656.5H683.5V654.5H685.5V652.5H687.5V650.5H689.5V648.5H690.5V646.5H692.5V644.5H693.5V642.5H695.5V640.5H696.5V638.5H698.5V636.5H699.5V634.5H700.5V632.5H701.5V630.5H702.5V628.5H703.5V626.5H704.5V624.5H705.5V622.5H706.5V620.5H707.5V618.5H708.5V616.5H709.5V614.5H710.5V612.5H711.5V610.5H712.5V608.5H713.5V606.5H714.5V604.5H715.5V602.5H716.5V600.5H717.5V598.5H718.5V596.5H719.5V594.5H720.5V592.5H721.5V588.5H723.5V584.5H725.5V580.5H726.5V578.5H727.5V576.5H728.5V574.5H729.5V572.5H730.5V570.5H731.5V568.5H732.5V566.5H733.5V564.5H734.5V562.5H735.5V560.5H736.5V558.5H737.5V556.5H738.5V554.5H739.5V552.5H740.5V550.5H742.5V548.5H743.5V546.5H744.5V544.5H745.5V542.5H747.5V540.5H748.5V538.5H749.5V536.5H751.5V534.5H753.5V532.5H755.5V530.5H757.5V528.5H759.5V526.5H765.5V524.5H776.5V526.5H779.5V528.5H781.5V530.5H783.5V532.5H785.5V534.5H787.5V536.5H789.5V538.5H790.5V540.5H791.5V542.5H793.5V544.5H794.5V546.5H796.5V548.5H797.5V550.5H798.5V552.5H799.5V554.5H800.5V556.5H801.5V558.5H803.5V562.5H804.5V564.5H805.5V566.5H806.5V568.5H807.5V570.5H808.5V572.5H809.5V574.5H810.5V576.5H811.5V578.5H812.5V580.5H813.5V582.5H814.5V584.5H815.5V586.5H816.5V588.5H817.5V590.5H818.5V594.5H819.5V596.5H821.5V600.5H822.5V602.5H823.5V604.5H824.5V606.5H825.5V608.5H826.5V610.5H827.5V612.5H828.5V614.5H829.5V616.5H830.5V618.5H831.5V620.5H832.5V622.5H833.5V624.5H834.5V626.5H835.5V628.5H836.5V630.5H837.5V632.5H838.5V634.5H839.5V636.5H841.5V638.5H842.5V640.5H843.5V642.5H845.5V644.5H846.5V646.5H848.5V648.5H849.5V650.5H851.5V652.5H853.5V654.5H857.5V656.5H858.5V658.5H864.5V660.5H865.5V658.5H866.5V660.5H867.5V658.5H873.5V656.5H877.5V654.5H879.5V652.5H882.5V650.5H883.5V648.5H886.5V646.5H887.5V644.5H889.5V642.5H890.5V640.5H891.5V638.5H892.5V636.5H894.5V634.5H895.5V632.5H896.5V630.5H897.5V628.5H898.5V626.5H900.5V622.5H902.5V618.5H903.5V616.5H904.5V614.5H906.5V612.5H907.5V608.5H908.5V606.5H909.5V604.5H910.5V602.5H911.5V600.5H912.5V598.5H913.5V596.5H914.5V592.5H916.5V588.5H917.5V586.5H919.5V582.5H920.5V580.5H921.5V578.5H922.5V576.5H923.5V574.5H924.5V572.5H925.5V570.5H926.5V568.5H927.5V566.5H928.5V564.5H929.5V562.5H930.5V560.5H931.5V558.5H932.5V556.5H933.5V554.5H934.5V552.5H936.5V548.5H938.5V546.5H939.5V544.5H940.5V542.5H941.5V540.5H943.5V538.5H944.5V536.5H946.5V534.5H948.5V532.5H950.5V530.5H952.5V528.5H955.5V526.5H958.5V524.5H970.5V526.5H973.5V528.5H975.5V530.5H979.5V532.5H980.5V534.5H982.5V536.5H983.5V538.5H985.5V540.5H986.5V542.5H988.5V544.5H989.5V546.5H991.5V548.5H992.5V550.5H993.5V552.5H994.5V554.5H995.5V556.5H996.5V558.5H996" stroke="#b0f058" stroke-width="1.2" fill="none"/></svg>

<!-- channel markers -->
<svg class="a" style="left:0;top:0" width="1213" height="731">
 <path d="M4 195H15.5L21 200.5L15.5 206H4Z" fill="#ffff40" stroke="#202000" stroke-width="1"/>
 <path d="M4 316H15.5L21 321.5L15.5 327H4Z" fill="#a8fbf0" stroke="#0a2a28" stroke-width="1"/>
 <path d="M4 442H15.5L21 447.5L15.5 453H4Z" fill="#ff10ff" stroke="#300030" stroke-width="1"/>
 <path d="M4 582H15.5L21 587.5L15.5 593H4Z" fill="#99ff33" stroke="#103000" stroke-width="1"/>
 <path d="M999 200.5L1004.5 195H1016V206H1004.5Z" fill="#ffff40" stroke="#202000" stroke-width="1"/>
</svg>
<div class="t" style="left:8px;top:196px;font-size:10px;font-weight:bold;color:#000">1</div>
<div class="t" style="left:7px;top:317px;font-size:10px;font-weight:bold;color:#000">2</div>
<div class="t" style="left:7px;top:443px;font-size:10px;font-weight:bold;color:#c00080">3</div>
<div class="t" style="left:7px;top:583px;font-size:10px;font-weight:bold;color:#000">4</div>
<div class="t" style="left:1007px;top:196px;font-size:10px;font-weight:bold;color:#303000">T</div>

<!-- bottom labels -->
<div class="a" style="left:23px;top:686px;width:92px;height:19px;background:#000"></div>
<div class="t" style="left:25px;top:690px;font-size:12.5px;color:#f0f060">CH1 ∿ 200mV</div>
<div class="a" style="left:133px;top:686px;width:92px;height:19px;background:#000"></div>
<div class="t" style="left:135px;top:690px;font-size:12.5px;color:#b0e4f4">CH2 ∿ 200mV</div>
<div class="a" style="left:243px;top:686px;width:92px;height:19px;background:#000"></div>
<div class="t" style="left:245px;top:690px;font-size:12.5px;color:#c030e0">CH3 ∿ &nbsp;2.00V</div>
<div class="a" style="left:353px;top:686px;width:92px;height:19px;background:#000"></div>
<div class="a" style="left:354px;top:688px;width:27px;height:15px;background:#99f033"></div>
<div class="t" style="left:355px;top:690px;font-size:12.5px;color:#99f033"><span style="color:#003000">CH4</span> ∿ &nbsp;2.00V</div>
<div class="a" style="left:906px;top:686px;width:90px;height:19px;background:#000"></div>
<div class="t" style="left:909px;top:690px;font-size:12.5px;color:#e8a050">Time: 500.0us</div>

<!-- right panel -->
<div class="a" style="left:1017px;top:93px;width:194px;height:615px;background:#f0f0f0"></div>
<div class="a" style="left:1017px;top:93px;width:3px;height:615px;background:#fafafa"></div>
<div class="t" style="left:1031px;top:103px;font-size:10.6px">Connect:</div>
<div class="a" style="left:1077px;top:98px;width:21px;height:21px;border-radius:50%;background:#a0a0a0;border:1px solid #707070"></div>
<div class="a" style="left:1020px;top:122px;width:191px;height:1px;background:#dedede"></div>
<!-- scrollbar -->
<div class="a" style="left:1198px;top:125px;width:13px;height:575px;background:#f0f0f0"></div>
<div class="a" style="left:1198px;top:139px;width:13px;height:425px;background:#d8d8d8"></div>
<svg class="a" style="left:1199px;top:127px" width="12" height="10"><path d="M2 7L6 3L10 7" stroke="#505050" stroke-width="1.6" fill="none"/></svg>
<div class="a" style="left:1197px;top:125px;width:1px;height:580px;background:#e4e4e4"></div>

<!-- Horizontal group -->
<div class="gb" style="left:1025px;top:134px;width:168px;height:110px"></div>
<div class="gbl" style="left:1031px;top:128px">Horizontal</div>
<div class="lbl" style="left:1028px;top:150px">Time / DIV</div>
<div class="combo" style="left:1028px;top:167px;width:68px;height:22px"><span>500.0us</span><i></i></div>
<div class="lbl" style="left:1028px;top:197px">Format</div>
<div class="combo" style="left:1028px;top:216px;width:68px;height:22px;color:#4a4a4a"><span>Y - T</span><i></i></div>
<svg class="a" style="left:1095px;top:140px" width="100" height="100"><defs><linearGradient id="kg1" x1="0" y1="0" x2="0" y2="1"><stop offset="0" stop-color="#c4c4c4"/><stop offset="1" stop-color="#94949a"/></linearGradient></defs><path d="M23.60 77.33 A38 38 0 1 1 76.40 77.33" stroke="#202020" stroke-width="1.1" fill="none"/><path d="M24.58 76.33 A36.6 36.6 0 1 1 75.42 76.33" stroke="#ffffff" stroke-width="1.6" fill="none"/><circle cx="50" cy="50" r="35.2" fill="url(#kg1)"/><circle cx="50" cy="50" r="34.4" fill="none" stroke="#888" stroke-width="0.8" opacity="0.5"/><circle cx="50" cy="50" r="28.8" fill="#2012cc" stroke="#140c88" stroke-width="1.8"/><path d="M25.25 74.75 L18.89 81.11 M74.75 74.75 L81.11 81.11" stroke="#111" stroke-width="1.4"/><path d="M51.70 42.40 L55.10 26.70" stroke="#d4ccb0" stroke-width="2" /></svg>

<!-- Vertical group -->
<div class="gb" style="left:1025px;top:259px;width:168px;height:149px"></div>
<div class="gbl" style="left:1031px;top:253px">Vertical</div>
<div class="combo" style="left:1028px;top:275px;width:68px;height:22px"><span>CH4</span><i></i></div>
<div class="a" style="left:1101px;top:277px;width:13px;height:13px;border:1px solid #333;background:#fff"></div>
<svg class="a" style="left:1101px;top:277px" width="13" height="13"><path d="M2.5 6.5L5 9.5L10.5 3" stroke="#222" stroke-width="1.2" fill="none"/></svg>
<div class="lbl" style="left:1117px;top:279px">ON/OFF</div>
<div class="a" style="left:1028px;top:303px;width:68px;height:21px;background:#fff;border:1px solid #a8a8a8"></div>
<div class="lbl" style="left:1032px;top:308px">2.00V</div>
<div class="a" style="left:1079px;top:305px;width:15px;height:8px;border:1px solid #c8c8c8;background:#f0f0f0"></div>
<div class="a" style="left:1079px;top:314px;width:15px;height:8px;border:1px solid #c8c8c8;background:#f0f0f0"></div>
<svg class="a" style="left:1079px;top:305px" width="15" height="17"><path d="M5 6L7.5 3L10 6Z M5 11L7.5 14L10 11Z" fill="#000"/></svg>
<div class="combo" style="left:1028px;top:330px;width:68px;height:22px"><span>AC</span><i></i></div>
<div class="combo" style="left:1028px;top:358px;width:68px;height:22px"><span>x1</span><i></i></div>
<svg class="a" style="left:1095px;top:290px" width="100" height="100"><defs><linearGradient id="kg2" x1="0" y1="0" x2="0" y2="1"><stop offset="0" stop-color="#c4c4c4"/><stop offset="1" stop-color="#94949a"/></linearGradient></defs><path d="M23.60 77.33 A38 38 0 1 1 76.40 77.33" stroke="#202020" stroke-width="1.1" fill="none"/><path d="M24.58 76.33 A36.6 36.6 0 1 1 75.42 76.33" stroke="#ffffff" stroke-width="1.6" fill="none"/><circle cx="50" cy="50" r="35.2" fill="url(#kg2)"/><circle cx="50" cy="50" r="34.4" fill="none" stroke="#888" stroke-width="0.8" opacity="0.5"/><circle cx="50" cy="50" r="28.8" fill="#99f52e" stroke="#2e7c0e" stroke-width="1.8"/><path d="M25.25 74.75 L18.89 81.11 M74.75 74.75 L81.11 81.11" stroke="#111" stroke-width="1.4"/><path d="M26.30 48.30 L42.60 49.40" stroke="#8050a0" stroke-width="2" /></svg>

<!-- Trigger group -->
<div class="gb" style="left:1025px;top:421px;width:168px;height:241px"></div>
<div class="gbl" style="left:1031px;top:415px">Trigger</div>
<div class="lbl" style="left:1028px;top:442px">Trigger Mode</div>
<div class="combo" style="left:1115px;top:436px;width:68px;height:22px"><span>Edge</span><i></i></div>
<div class="lbl" style="left:1028px;top:472px">Trigger Sweep</div>
<div class="combo" style="left:1115px;top:466px;width:68px;height:22px"><span>AUTO</span><i></i></div>
<div class="lbl" style="left:1028px;top:502px">Trigger Source</div>
<div class="combo" style="left:1115px;top:496px;width:68px;height:22px"><span>CH1</span><i></i></div>
<div class="lbl" style="left:1028px;top:531px">Trigger Slope</div>
<div class="combo" style="left:1115px;top:527px;width:68px;height:22px"><span>+</span><i></i></div>

<div class="a" style="left:1109px;top:702px;width:78px;height:1px;background:#dcdcdc"></div>
<div class="lbl" style="left:1029px;top:696px">Move Waveform</div>

<!-- status bar -->
<div class="a" style="left:0;top:708px;width:1211px;height:2px;background:#fafafa"></div>
<div class="a" style="left:0;top:710px;width:1211px;height:21px;background:#f2f2f2"></div><div class="a" style="left:0;top:729px;width:1213px;height:2px;background:#c8c8c8"></div>
<div class="t" style="left:3px;top:714px;font-size:13px">Connected</div>
<div class="a" style="left:1083px;top:711px;width:1px;height:20px;background:#d8d8d8"></div>
<div class="t" style="left:1089px;top:714px;font-size:13px;width:103px;overflow:hidden">16-04-2016&nbsp; 11:06</div>
<svg class="a" style="left:1196px;top:716px" width="14" height="14"><path d="M9 3h2v2h-2zM6 6h2v2h-2zM9 6h2v2h-2zM3 9h2v2h-2zM6 9h2v2h-2zM9 9h2v2h-2z" fill="#b8b8b8"/></svg>
</body></html>
